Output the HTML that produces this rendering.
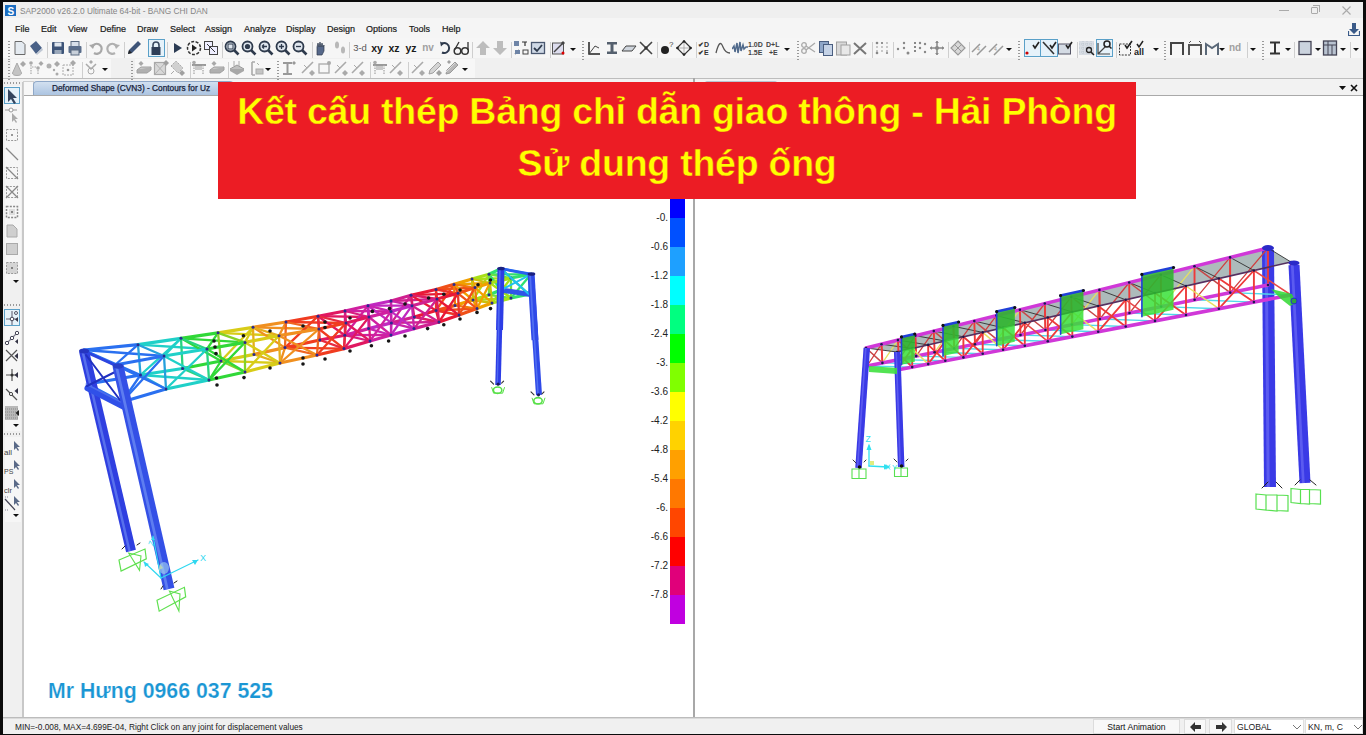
<!DOCTYPE html>
<html><head><meta charset="utf-8">
<style>
*{box-sizing:border-box}
html,body{margin:0;padding:0;width:1366px;height:735px;overflow:hidden;background:#0c0c0c;font-family:"Liberation Sans",sans-serif}
.a{position:absolute}
#win{position:absolute;left:3px;top:2px;width:1360px;height:732px;background:#f0f0f0;overflow:hidden}
.t{position:absolute;white-space:nowrap;font-size:8.3px;color:#1a1a1a;line-height:10px}
.menu .t{top:22px;font-size:9px;color:#1a1a1a;-webkit-text-stroke:0.2px #1a1a1a}
.vp{position:absolute;background:#fff}
</style></head><body>
<div id="win">
  <!-- title bar -->
  <div class="a" style="left:0;top:0;width:1360px;height:16px;background:#efefef"></div><div class="a" style="left:0;top:16px;width:1360px;height:20px;background:#f5f5f5"></div>
  <div class="a" style="left:2px;top:3px;width:11px;height:11px;background:#1b6ec2"></div>
  <div class="t" style="left:4.5px;top:3.5px;font:bold 10px 'Liberation Sans';color:#fff">S</div>
  <div class="t" style="left:17px;top:4px;color:#858585;font-size:8.3px">SAP2000 v26.2.0 Ultimate 64-bit - BANG CHI DAN</div>
  <!-- window buttons -->
  <div class="a" style="left:1276px;top:8px;width:10px;height:1px;background:#aaa"></div>
  <div class="a" style="left:1308px;top:5px;width:7px;height:7px;border:1px solid #aaa;border-radius:1px"></div><div class="a" style="left:1310px;top:3px;width:7px;height:7px;border-top:1px solid #aaa;border-right:1px solid #aaa"></div>
  <svg class="a" style="left:1339px;top:4px" width="9" height="9"><path d="M0.5 0.5l8 8M8.5 0.5l-8 8" stroke="#aaa" stroke-width="1.1"/></svg><svg class="a" style="left:1345px;top:21px" width="12" height="13"><path d="M4 0h4v6h3l-5 5-5-5h3z" fill="#3a5a88"/><path d="M0.5 8v4.5h11V8" fill="none" stroke="#3a5a88" stroke-width="1.2"/></svg>
  <!-- menu -->
  <div class="menu">
    <div class="t" style="left:12px">File</div>
    <div class="t" style="left:38px">Edit</div>
    <div class="t" style="left:65px">View</div>
    <div class="t" style="left:97px">Define</div>
    <div class="t" style="left:134px">Draw</div>
    <div class="t" style="left:167px">Select</div>
    <div class="t" style="left:202px">Assign</div>
    <div class="t" style="left:241px">Analyze</div>
    <div class="t" style="left:283px">Display</div>
    <div class="t" style="left:324px">Design</div>
    <div class="t" style="left:363px">Options</div>
    <div class="t" style="left:406px">Tools</div>
    <div class="t" style="left:439px">Help</div>
  </div>
  <!-- toolbars -->
  <div class="a" style="left:0;top:36px;width:1360px;height:20px;background:#f6f6f6"></div><div class="a" style="left:0;top:56px;width:1360px;height:20px;background:#f0f0f0"></div><div class="a" style="left:8px;top:57px;width:100px;height:19px;background:#f7f7f7"></div><div class="a" style="left:132px;top:57px;width:340px;height:19px;background:#f7f7f7"></div><div class="a" style="left:0;top:77px;width:1360px;height:17px;background:#f2f2f2"></div>
  
  <!-- tab row -->
  <div class="a" style="left:0;top:76px;width:1360px;height:1px;background:#bdbdbd"></div>
  <!-- left toolbar -->
  <div class="a" style="left:0;top:80px;width:19px;height:638px;background:#f0f0f0"></div>
  <div class="a" style="left:19px;top:80px;width:2px;height:638px;background:#c8c8c8"></div>
  <!-- left tab -->
  <div class="a" style="left:20px;top:79px;width:11px;height:15px;background:#f7f7f7;border:1px solid #d0d0d0;border-bottom:none"></div><div class="a" style="left:30px;top:79px;width:200px;height:15px;background:linear-gradient(#d2e0f0,#a9c2e0);border-radius:4px 3px 0 0;border:1px solid #8fa8c8;border-bottom:none"></div><div class="a" style="left:702px;top:79px;width:72px;height:3px;background:#b8c4d0;border-radius:2px 2px 0 0"></div>
  <div class="t" style="left:49px;top:81px;color:#18233a;-webkit-text-stroke:0.25px #18233a">Deformed Shape (CVN3) - Contours for Uz</div>
  <!-- viewports -->
  <div class="vp" style="left:21px;top:94px;width:669px;height:622px"></div>
  <div class="a" style="left:690px;top:76px;width:2px;height:640px;background:#a8a8a8"></div>
  <div class="vp" style="left:692px;top:94px;width:668px;height:622px"></div>
  <div class="a" style="left:21px;top:93px;width:1339px;height:1px;background:#a9a9a9"></div>
  <!-- right close buttons -->
  <svg class="a" style="left:1336px;top:84px" width="7" height="4"><path d="M0 0h7L3.5 4z" fill="#111"/></svg>
  <svg class="a" style="left:1347px;top:82px" width="8" height="8"><path d="M1 1l6 6M7 1L1 7" stroke="#111" stroke-width="1.6"/></svg>
  <!-- status bar -->
  <div class="a" style="left:0;top:715px;width:1360px;height:1px;background:#bcbcbc"></div><div class="a" style="left:0;top:716px;width:1360px;height:1px;background:#dadada"></div>
  <div class="a" style="left:0;top:717px;width:1360px;height:15px;background:#f0f0f0"></div>
  <div class="t" style="left:12px;top:720px;color:#222">MIN=-0.008, MAX=4.699E-04, Right Click on any joint for displacement values</div>
  <div class="a" style="left:1090px;top:717px;width:87px;height:15px;background:#f8f8f8;border:1px solid #dcdcdc"><div class="t" style="left:0;width:100%;text-align:center;top:2px;font-size:8.6px;color:#111">Start Animation</div></div>
<div class="a" style="left:1181px;top:717px;width:22px;height:15px;background:#f8f8f8;border:1px solid #dcdcdc"><svg class="a" style="left:5px;top:2px" width="11" height="10"><path d="M0 5l5-5v3h6v4H5v3z" fill="#333"/></svg></div>
<div class="a" style="left:1206px;top:717px;width:23px;height:15px;background:#f8f8f8;border:1px solid #dcdcdc"><svg class="a" style="left:6px;top:2px" width="11" height="10"><path d="M11 5L6 0v3H0v4h6v3z" fill="#333"/></svg></div>
<div class="a" style="left:1231px;top:717px;width:70px;height:15px;background:#fff;border:1px solid #e0e0e0"><div class="t" style="left:2px;top:2px;font-size:8.6px;color:#222">GLOBAL</div><svg class="a" style="left:58px;top:5px" width="8" height="5"><path d="M0 0l4 4 4-4" fill="none" stroke="#777"/></svg></div>
<div class="a" style="left:1302px;top:717px;width:58px;height:15px;background:#fff;border:1px solid #e0e0e0"><div class="t" style="left:2px;top:2px;font-size:8.6px;color:#222">KN, m, C</div><svg class="a" style="left:48px;top:5px" width="8" height="5"><path d="M0 0l4 4 4-4" fill="none" stroke="#777"/></svg></div>
<div class="a" style="left:5px;top:38.5px;width:2px;height:19px;background:repeating-linear-gradient(#9a9a9a 0 1px,transparent 1px 3px)"></div>
<svg class="a" style="left:9px;top:37.5px" width="16" height="16" viewBox="0 0 16 16"><path d="M3 1.5h7l3 3v10H3z" fill="#e4eaf0" stroke="#6a6a6a"/></svg>
<svg class="a" style="left:25px;top:37.5px" width="16" height="16" viewBox="0 0 16 16"><path d="M2 6l6-5 6 7-6 6z" fill="#4a6288"/><path d="M8 14l6-6 1 2-6 5z" fill="#c0c8d4"/></svg>
<div class="a" style="left:44px;top:39.5px;width:1px;height:16px;background:#cfcfcf"></div>
<svg class="a" style="left:47px;top:37.5px" width="16" height="16" viewBox="0 0 16 16"><rect x="2" y="2" width="12" height="12" rx="1" fill="#3d5478"/><rect x="4.5" y="2.5" width="7" height="4" fill="#dfe6ee"/><rect x="4.5" y="10" width="7" height="4" fill="#9aa8ba"/></svg>
<svg class="a" style="left:64px;top:37.5px" width="16" height="16" viewBox="0 0 16 16"><rect x="4" y="1.5" width="8" height="5" fill="#d8e0ea" stroke="#5a6a80"/><rect x="1.5" y="6" width="13" height="7" rx="1" fill="#5a6e8c"/><rect x="4" y="10" width="8" height="5" fill="#c8d0da" stroke="#5a6a80"/></svg>
<div class="a" style="left:83px;top:39.5px;width:1px;height:16px;background:#cfcfcf"></div>
<svg class="a" style="left:85px;top:37.5px" width="16" height="16" viewBox="0 0 16 16"><path d="M4 7a5 5 0 1 1 2 6" fill="none" stroke="#a8a8a8" stroke-width="2.2"/><path d="M1 5l4 4 2-5z" fill="#a8a8a8"/></svg>
<svg class="a" style="left:102px;top:37.5px" width="16" height="16" viewBox="0 0 16 16"><path d="M12 7a5 5 0 1 0-2 6" fill="none" stroke="#b0b0b0" stroke-width="2.2"/><path d="M15 5l-4 4-2-5z" fill="#b0b0b0"/></svg>
<div class="a" style="left:121px;top:39.5px;width:1px;height:16px;background:#cfcfcf"></div>
<svg class="a" style="left:123px;top:37.5px" width="16" height="16" viewBox="0 0 16 16"><path d="M2 14l1-4 9-9 3 3-9 9z" fill="#3e5478"/><path d="M2 14l1-4 3 3z" fill="#222"/></svg>
<div class="a" style="left:145px;top:36.5px;width:17px;height:18px;border:1px solid #5aa0c8;background:#e6f2fa"></div>
<svg class="a" style="left:145px;top:37.5px" width="16" height="16" viewBox="0 0 16 16"><path d="M5 7V5a3 3 0 0 1 6 0v2" fill="none" stroke="#3a4a62" stroke-width="1.6"/><rect x="3.5" y="7" width="9" height="8" fill="#2e3e58"/></svg>
<div class="a" style="left:164px;top:39.5px;width:1px;height:16px;background:#cfcfcf"></div>
<svg class="a" style="left:166px;top:37.5px" width="16" height="16" viewBox="0 0 16 16"><path d="M5 3l8 5-8 5z" fill="#2c3c54"/></svg>
<svg class="a" style="left:183px;top:37.5px" width="16" height="16" viewBox="0 0 16 16"><circle cx="8" cy="8" r="6.5" fill="none" stroke="#333" stroke-width="1.5" stroke-dasharray="3 1.5"/><path d="M6 4.5l5 3.5-5 3.5z" fill="#222"/></svg>
<svg class="a" style="left:200px;top:37.5px" width="16" height="16" viewBox="0 0 16 16"><rect x="1.5" y="1.5" width="8" height="8" fill="#eef" stroke="#444"/><rect x="6.5" y="6.5" width="8" height="8" fill="#eef" stroke="#444"/><path d="M4 4l8 8" stroke="#333"/></svg>
<div class="a" style="left:219px;top:39.5px;width:1px;height:16px;background:#cfcfcf"></div>
<svg class="a" style="left:221px;top:37.5px" width="16" height="16" viewBox="0 0 16 16"><circle cx="6.5" cy="6.5" r="5" fill="#dfe6ee" stroke="#2e3a4c" stroke-width="1.8"/><rect x="4" y="4" width="5" height="5" fill="none" stroke="#2e3a4c"/><path d="M10 10l4.5 4.5" stroke="#2e3a4c" stroke-width="2.6"/></svg>
<svg class="a" style="left:238px;top:37.5px" width="16" height="16" viewBox="0 0 16 16"><circle cx="6.5" cy="6.5" r="5" fill="#dfe6ee" stroke="#2e3a4c" stroke-width="1.8"/><circle cx="6.5" cy="6.5" r="2.6" fill="#2e3a4c"/><path d="M10 10l4.5 4.5" stroke="#2e3a4c" stroke-width="2.6"/></svg>
<svg class="a" style="left:255px;top:37.5px" width="16" height="16" viewBox="0 0 16 16"><circle cx="6.5" cy="6.5" r="5" fill="#dfe6ee" stroke="#2e3a4c" stroke-width="1.8"/><path d="M4 6.5h5M4 6.5l2-2M4 6.5l2 2" stroke="#2e3a4c" stroke-width="1.3"/><path d="M10 10l4.5 4.5" stroke="#2e3a4c" stroke-width="2.6"/></svg>
<svg class="a" style="left:272px;top:37.5px" width="16" height="16" viewBox="0 0 16 16"><circle cx="6.5" cy="6.5" r="5" fill="#dfe6ee" stroke="#2e3a4c" stroke-width="1.8"/><path d="M4 6.5h5M6.5 4v5" stroke="#2e3a4c" stroke-width="1.3"/><path d="M10 10l4.5 4.5" stroke="#2e3a4c" stroke-width="2.6"/></svg>
<svg class="a" style="left:289px;top:37.5px" width="16" height="16" viewBox="0 0 16 16"><circle cx="6.5" cy="6.5" r="5" fill="#dfe6ee" stroke="#2e3a4c" stroke-width="1.8"/><path d="M4 6.5h5" stroke="#2e3a4c" stroke-width="1.3"/><path d="M10 10l4.5 4.5" stroke="#2e3a4c" stroke-width="2.6"/></svg>
<div class="a" style="left:309px;top:39.5px;width:1px;height:16px;background:#cfcfcf"></div>
<svg class="a" style="left:310px;top:37.5px" width="16" height="16" viewBox="0 0 16 16"><path d="M4 15V7l1-4 1 4 1-5 1 5 1-4 1 4 1-2v6l-2 4z" fill="#56688a" stroke="#2e3a4c" stroke-width=".7"/></svg>
<svg class="a" style="left:329px;top:37.5px" width="16" height="16" viewBox="0 0 16 16"><ellipse cx="5" cy="5" rx="2" ry="3.5" fill="#b8b8b8"/><ellipse cx="11" cy="10" rx="2" ry="3.5" fill="#b8b8b8"/></svg>
<div class="a" style="left:346px;top:39.5px;width:1px;height:16px;background:#cfcfcf"></div>
<div class="t" style="left:357px;top:39.5px;transform:translateX(-50%);font:normal 9.5px 'Liberation Sans';color:#555;line-height:12px">3-d</div>
<div class="t" style="left:374px;top:39.5px;transform:translateX(-50%);font:bold 10.5px 'Liberation Sans';color:#1a1a1a;line-height:12px">xy</div>
<div class="t" style="left:391px;top:39.5px;transform:translateX(-50%);font:bold 10.5px 'Liberation Sans';color:#1a1a1a;line-height:12px">xz</div>
<div class="t" style="left:408px;top:39.5px;transform:translateX(-50%);font:bold 10.5px 'Liberation Sans';color:#1a1a1a;line-height:12px">yz</div>
<div class="t" style="left:425px;top:39.5px;transform:translateX(-50%);font:bold 10px 'Liberation Sans';color:#a0a0a0;line-height:12px">nv</div>
<svg class="a" style="left:434px;top:37.5px" width="16" height="16" viewBox="0 0 16 16"><path d="M5 3.5a5 5 0 1 1 0 9" fill="none" stroke="#2e3a4c" stroke-width="2"/><path d="M3 1.5l4 2-3 3z" fill="#2e3a4c"/></svg>
<svg class="a" style="left:450px;top:37.5px" width="16" height="16" viewBox="0 0 16 16"><circle cx="4.5" cy="11" r="3.3" fill="none" stroke="#333" stroke-width="1.5"/><circle cx="12" cy="11" r="3.3" fill="none" stroke="#333" stroke-width="1.5"/><path d="M1.5 10L6 2M15 10V2" stroke="#333" stroke-width="1.3"/></svg>
<div class="a" style="left:469px;top:39.5px;width:1px;height:16px;background:#cfcfcf"></div>
<svg class="a" style="left:472px;top:37.5px" width="16" height="16" viewBox="0 0 16 16"><path d="M8 1l7 7h-4v7H5V8H1z" fill="#bdbdbd"/></svg>
<svg class="a" style="left:489px;top:37.5px" width="16" height="16" viewBox="0 0 16 16"><path d="M8 15l7-7h-4V1H5v7H1z" fill="#bdbdbd"/></svg>
<div class="a" style="left:508px;top:39.5px;width:1px;height:16px;background:#cfcfcf"></div>
<svg class="a" style="left:510px;top:37.5px" width="16" height="16" viewBox="0 0 16 16"><rect x="1" y="1" width="5" height="5" fill="#6e84a6"/><rect x="10" y="10" width="5" height="4" fill="none" stroke="#444"/><path d="M9 2l5 0M12 2v4M2 14l4-4" stroke="#333" stroke-width="1.2"/><rect x="2" y="10" width="5" height="4" fill="#6e84a6"/></svg>
<svg class="a" style="left:527px;top:37.5px" width="16" height="16" viewBox="0 0 16 16"><rect x="1.5" y="2.5" width="13" height="11" fill="#cfd9e6" stroke="#4a5870" stroke-width="1.3"/><path d="M4 8l3 3 5-6" fill="none" stroke="#2e3a4c" stroke-width="1.8"/></svg>
<div class="a" style="left:547px;top:39.5px;width:1px;height:16px;background:#cfcfcf"></div>
<svg class="a" style="left:548px;top:37.5px" width="16" height="16" viewBox="0 0 16 16"><rect x="1.5" y="3" width="11" height="11" fill="#dde" stroke="#555"/><path d="M3 12l9-9" stroke="#444" stroke-width="1.5"/><circle cx="12" cy="13" r="1.5" fill="#d00"/><path d="M12 1l2 2-2 2-2-2z" fill="#444"/></svg>
<svg class="a" style="left:567px;top:45.5px" width="6" height="4"><path d="M0 0H6L3 3Z" fill="#111"/></svg>
<div class="a" style="left:579px;top:38.5px;width:2px;height:19px;background:repeating-linear-gradient(#9a9a9a 0 1px,transparent 1px 3px)"></div>
<svg class="a" style="left:583px;top:37.5px" width="16" height="16" viewBox="0 0 16 16"><path d="M3 2v12h11" fill="none" stroke="#222" stroke-width="1.5"/><path d="M3 14l6-8 4 2" fill="none" stroke="#444"/></svg>
<svg class="a" style="left:601px;top:37.5px" width="16" height="16" viewBox="0 0 16 16"><path d="M3 2h10v2.5H9.5v7H13V14H3v-2.5h3.5v-7H3z" fill="#55606e"/></svg>
<svg class="a" style="left:618px;top:37.5px" width="16" height="16" viewBox="0 0 16 16"><path d="M1 11l4-5h10l-4 5z" fill="#d0d6de" stroke="#444"/></svg>
<svg class="a" style="left:635px;top:37.5px" width="16" height="16" viewBox="0 0 16 16"><path d="M2 2l12 12M2 14l12-12" stroke="#444" stroke-width="1.6"/><circle cx="8" cy="8" r="1.7" fill="#333"/></svg>
<div class="a" style="left:654px;top:39.5px;width:1px;height:16px;background:#cfcfcf"></div>
<svg class="a" style="left:656px;top:37.5px" width="16" height="16" viewBox="0 0 16 16"><circle cx="6" cy="10" r="4" fill="#222"/><text x="10" y="7" font-size="8" fill="#444" font-family="Liberation Sans">?</text></svg>
<svg class="a" style="left:673px;top:37.5px" width="16" height="16" viewBox="0 0 16 16"><path d="M8 1l7 7-7 7-7-7z" fill="none" stroke="#333" stroke-width="1.2"/><path d="M8 1v14M1 8h14" stroke="#999" stroke-width=".7"/><circle cx="8" cy="1.5" r="1.3" fill="#222"/><circle cx="8" cy="14.5" r="1.3" fill="#222"/><circle cx="1.5" cy="8" r="1.3" fill="#222"/><circle cx="14.5" cy="8" r="1.3" fill="#222"/></svg>
<div class="a" style="left:693px;top:39.5px;width:1px;height:16px;background:#cfcfcf"></div>
<svg class="a" style="left:695px;top:37.5px" width="16" height="16" viewBox="0 0 16 16"><text x="0" y="7" font-size="7" font-weight="bold" fill="#333" font-family="Liberation Sans">&#x2714;D</text><text x="0" y="15" font-size="7" font-weight="bold" fill="#333" font-family="Liberation Sans">&#x2714;E</text></svg>
<svg class="a" style="left:712px;top:37.5px" width="16" height="16" viewBox="0 0 16 16"><path d="M1 13C4 1 6 2 8 7s4 6 7 6" fill="none" stroke="#555" stroke-width="1.3"/></svg>
<svg class="a" style="left:729px;top:37.5px" width="16" height="16" viewBox="0 0 16 16"><path d="M0 9l2-3 1 6 2-9 1 10 2-11 1 9 2-6 1 4 2-2h2" fill="none" stroke="#506a8c" stroke-width="1.5"/></svg>
<svg class="a" style="left:745px;top:37.5px" width="16" height="16" viewBox="0 0 16 16"><text x="0" y="7" font-size="7" font-weight="bold" fill="#444" font-family="Liberation Sans">1.0D</text><text x="0" y="15" font-size="7" font-weight="bold" fill="#444" font-family="Liberation Sans">1.5E</text></svg>
<svg class="a" style="left:763px;top:37.5px" width="16" height="16" viewBox="0 0 16 16"><text x="0" y="7" font-size="7" font-weight="bold" fill="#444" font-family="Liberation Sans">D+L</text><text x="3" y="15" font-size="7" font-weight="bold" fill="#444" font-family="Liberation Sans">+E</text></svg>
<svg class="a" style="left:781px;top:45.5px" width="6" height="4"><path d="M0 0H6L3 3Z" fill="#111"/></svg>
<div class="a" style="left:794px;top:38.5px;width:2px;height:19px;background:repeating-linear-gradient(#9a9a9a 0 1px,transparent 1px 3px)"></div>
<svg class="a" style="left:797px;top:37.5px" width="16" height="16" viewBox="0 0 16 16"><circle cx="4" cy="11" r="2.3" fill="none" stroke="#aaa" stroke-width="1.3"/><circle cx="4" cy="5" r="2.3" fill="none" stroke="#aaa" stroke-width="1.3"/><path d="M6 10L15 3M6 6l9 6" stroke="#aaa" stroke-width="1.3"/></svg>
<svg class="a" style="left:815px;top:37.5px" width="16" height="16" viewBox="0 0 16 16"><rect x="1.5" y="1.5" width="9" height="11" fill="#8ea6c8" stroke="#4a5e80"/><rect x="5.5" y="4.5" width="9" height="11" fill="#c4d2e6" stroke="#4a5e80"/></svg>
<svg class="a" style="left:832px;top:37.5px" width="16" height="16" viewBox="0 0 16 16"><rect x="1.5" y="2" width="10" height="13" fill="#d8d8d8" stroke="#a0a0a0"/><rect x="6" y="5" width="9" height="10" fill="#e8e8e8" stroke="#a0a0a0"/></svg>
<svg class="a" style="left:849px;top:37.5px" width="16" height="16" viewBox="0 0 16 16"><path d="M2 3l12 11M14 3L2 14" stroke="#777" stroke-width="2"/></svg>
<div class="a" style="left:869px;top:39.5px;width:1px;height:16px;background:#cfcfcf"></div>
<svg class="a" style="left:871px;top:37.5px" width="16" height="16" viewBox="0 0 16 16"><path d="M3 2v12M8 2v12M13 2v12" stroke="#999" stroke-dasharray="2 2"/><circle cx="3" cy="3" r="1.3" fill="#888"/><circle cx="3" cy="13" r="1.3" fill="#888"/><circle cx="8" cy="3" r="1.1" fill="#888"/><circle cx="13" cy="13" r="1.1" fill="#888"/></svg>
<div class="a" style="left:890px;top:39.5px;width:1px;height:16px;background:#cfcfcf"></div>
<svg class="a" style="left:892px;top:37.5px" width="16" height="16" viewBox="0 0 16 16"><circle cx="3" cy="9" r="1.2" fill="#888"/><circle cx="9" cy="3" r="1.2" fill="#888"/><circle cx="9" cy="8" r="1.2" fill="#888"/><circle cx="13" cy="13" r="1.5" fill="#888"/></svg>
<svg class="a" style="left:909px;top:37.5px" width="16" height="16" viewBox="0 0 16 16"><path d="M3 2v12" stroke="#888" stroke-width="2" stroke-dasharray="2 2"/><circle cx="8" cy="3" r="1.2" fill="#888"/><circle cx="8" cy="8" r="1.2" fill="#888"/><circle cx="13" cy="4" r="1.2" fill="#888"/><circle cx="13" cy="12" r="1.2" fill="#888"/></svg>
<svg class="a" style="left:926px;top:37.5px" width="16" height="16" viewBox="0 0 16 16"><path d="M8 1v14M1 8h14" stroke="#888" stroke-width="1.5"/><path d="M8 1l-2 2h4zM8 15l-2-2h4zM1 8l2-2v4zM15 8l-2-2v4z" fill="#888"/><circle cx="8" cy="8" r="2" fill="#888"/></svg>
<div class="a" style="left:945px;top:39.5px;width:1px;height:16px;background:#cfcfcf"></div>
<svg class="a" style="left:947px;top:37.5px" width="16" height="16" viewBox="0 0 16 16"><path d="M8 1l7 7-7 7-7-7z" fill="#d8d8d8" stroke="#999" stroke-width="1.2"/><path d="M4.5 4.5l7 7M11.5 4.5l-7 7" stroke="#999"/></svg>
<div class="a" style="left:966px;top:39.5px;width:1px;height:16px;background:#cfcfcf"></div>
<svg class="a" style="left:968px;top:37.5px" width="16" height="16" viewBox="0 0 16 16"><path d="M1 12l8-8M6 15l9-9" stroke="#999" stroke-width="1.5"/><text x="6" y="11" font-size="5" fill="#999">4</text></svg>
<svg class="a" style="left:985px;top:37.5px" width="16" height="16" viewBox="0 0 16 16"><path d="M1 12l8-8M6 15l9-9" stroke="#999" stroke-width="1.5"/><text x="6" y="11" font-size="5" fill="#999">4</text></svg>
<svg class="a" style="left:1003px;top:45.5px" width="6" height="4"><path d="M0 0H6L3 3Z" fill="#111"/></svg>
<div class="a" style="left:1015px;top:38.5px;width:2px;height:19px;background:repeating-linear-gradient(#9a9a9a 0 1px,transparent 1px 3px)"></div>
<div class="a" style="left:1021px;top:36.5px;width:17px;height:18px;border:1px solid #5aa0c8;background:#e6f2fa"></div><div class="a" style="left:1037px;top:36.5px;width:18px;height:18px;border:1px solid #5aa0c8;background:#e6f2fa"></div>
<svg class="a" style="left:1021px;top:37.5px" width="16" height="16" viewBox="0 0 16 16"><path d="M2 14l12-12" stroke="#444" stroke-dasharray="2 1" stroke-width="0"/><circle cx="3" cy="13" r="1.6" fill="#c00"/><path d="M9 5l2 3 4-6" fill="none" stroke="#222" stroke-width="1.6"/></svg>
<svg class="a" style="left:1038px;top:37.5px" width="16" height="16" viewBox="0 0 16 16"><path d="M2 2l11 12" stroke="#333" stroke-width="1.6"/><path d="M9 5l2 3 4-6" fill="none" stroke="#222" stroke-width="1.6"/></svg>
<svg class="a" style="left:1054px;top:37.5px" width="16" height="16" viewBox="0 0 16 16"><rect x="1.5" y="4" width="12" height="10" fill="#d4dbe4" stroke="#556"/><path d="M9 5l2 3 4-6" fill="none" stroke="#222" stroke-width="1.6"/></svg>
<div class="a" style="left:1074px;top:39.5px;width:1px;height:16px;background:#cfcfcf"></div>
<svg class="a" style="left:1076px;top:37.5px" width="16" height="16" viewBox="0 0 16 16"><rect x="0" y="1" width="15" height="14" fill="#d8dde4"/><path d="M0 4h15M0 8h15M0 12h15M4 1v14M8 1v14M12 1v14" stroke="#b0b8c4" stroke-width=".6" stroke-dasharray="1 1"/><circle cx="10" cy="10" r="2.5" fill="none" stroke="#222" stroke-width="1.3"/><path d="M12 12l3 3" stroke="#222" stroke-width="1.5"/></svg>
<div class="a" style="left:1093px;top:36.5px;width:17px;height:18px;border:1px solid #5aa0c8;background:#e6f2fa"></div>
<svg class="a" style="left:1093px;top:37.5px" width="16" height="16" viewBox="0 0 16 16"><path d="M2 14L10 6M2 3v11h12" fill="none" stroke="#444" stroke-width="1.2"/><circle cx="11" cy="4" r="3" fill="none" stroke="#222" stroke-width="1.5"/><path d="M13 6l2.5 2.5" stroke="#222" stroke-width="1.5"/></svg>
<div class="a" style="left:1113px;top:39.5px;width:1px;height:16px;background:#cfcfcf"></div>
<svg class="a" style="left:1115px;top:37.5px" width="16" height="16" viewBox="0 0 16 16"><rect x="1.5" y="4" width="11" height="11" fill="none" stroke="#333" stroke-dasharray="2 1.2"/><path d="M7 5l2 3 5-7" fill="none" stroke="#222" stroke-width="1.6"/></svg>
<svg class="a" style="left:1131px;top:37.5px" width="16" height="16" viewBox="0 0 16 16"><path d="M3 4l2 3 4-6" fill="none" stroke="#222" stroke-width="1.5"/><text x="0" y="15" font-size="9" font-weight="bold" fill="#222" font-family="Liberation Sans">all</text></svg>
<svg class="a" style="left:1150px;top:45.5px" width="6" height="4"><path d="M0 0H6L3 3Z" fill="#111"/></svg>
<div class="a" style="left:1161px;top:38.5px;width:2px;height:19px;background:repeating-linear-gradient(#9a9a9a 0 1px,transparent 1px 3px)"></div>
<svg class="a" style="left:1166px;top:37.5px" width="16" height="16" viewBox="0 0 16 16"><path d="M2 15V3h12v12" fill="none" stroke="#444" stroke-width="2"/></svg>
<svg class="a" style="left:1184px;top:37.5px" width="16" height="16" viewBox="0 0 16 16"><path d="M2 15V5h12v10" fill="none" stroke="#555" stroke-width="2"/><path d="M2 3l2-2M14 3l-2-2" stroke="#555"/></svg>
<svg class="a" style="left:1201px;top:37.5px" width="16" height="16" viewBox="0 0 16 16"><path d="M2 15V4l6 4 6-4v11" fill="none" stroke="#5a6878" stroke-width="2"/></svg>
<svg class="a" style="left:1216px;top:45.5px" width="6" height="4"><path d="M0 0H6L3 3Z" fill="#111"/></svg>
<div class="t" style="left:1232px;top:39.5px;transform:translateX(-50%);font:bold 10px 'Liberation Sans';color:#a0a0a0;line-height:12px">nd</div>
<div class="a" style="left:1244px;top:39.5px;width:1px;height:16px;background:#cfcfcf"></div>
<svg class="a" style="left:1247px;top:45.5px" width="6" height="4"><path d="M0 0H6L3 3Z" fill="#111"/></svg>
<div class="a" style="left:1259px;top:38.5px;width:2px;height:19px;background:repeating-linear-gradient(#9a9a9a 0 1px,transparent 1px 3px)"></div>
<svg class="a" style="left:1264px;top:37.5px" width="16" height="16" viewBox="0 0 16 16"><path d="M3 2.5h10M3 13.5h10M8 2.5v11" stroke="#333" stroke-width="2"/></svg>
<svg class="a" style="left:1282px;top:45.5px" width="6" height="4"><path d="M0 0H6L3 3Z" fill="#111"/></svg>
<div class="a" style="left:1291px;top:39.5px;width:1px;height:16px;background:#cfcfcf"></div>
<svg class="a" style="left:1294px;top:37.5px" width="16" height="16" viewBox="0 0 16 16"><rect x="2" y="1.5" width="12" height="13" fill="#cbd3de" stroke="#445" stroke-width="1.3"/></svg>
<svg class="a" style="left:1312px;top:45.5px" width="6" height="4"><path d="M0 0H6L3 3Z" fill="#111"/></svg>
<svg class="a" style="left:1319px;top:37.5px" width="16" height="16" viewBox="0 0 16 16"><rect x="1.5" y="1" width="13" height="14" fill="#b8c2d0" stroke="#445" stroke-width="1.3"/><path d="M1.5 5h13M6 1v14M10 5v10" stroke="#445"/></svg>
<svg class="a" style="left:1337px;top:45.5px" width="6" height="4"><path d="M0 0H6L3 3Z" fill="#111"/></svg>
<div class="a" style="left:1347px;top:39.5px;width:1px;height:16px;background:#cfcfcf"></div>
<svg class="a" style="left:1350px;top:45.5px" width="6" height="4"><path d="M0 0H6L3 3Z" fill="#111"/></svg>
<div class="a" style="left:5px;top:59px;width:2px;height:19px;background:repeating-linear-gradient(#9a9a9a 0 1px,transparent 1px 3px)"></div>
<svg class="a" style="left:8px;top:58px" width="16" height="16" viewBox="0 0 16 16"><path d="M6 3L1.5 13a4.5 2.5 0 0 0 9 0z" fill="#c4c4c4" stroke="#aaa"/><path d="M12 1l3 3-3 3-3-3z" fill="#a8a8a8"/></svg>
<svg class="a" style="left:25px;top:58px" width="16" height="16" viewBox="0 0 16 16"><circle cx="3" cy="3" r="1.8" fill="#aaa"/><circle cx="10" cy="8" r="1.8" fill="#aaa"/><path d="M3 5v10M10 10v5M4 7l5 0" stroke="#aaa" stroke-width="1.2" stroke-dasharray="1.5 1"/><path d="M13 1l2.5 2.5L13 6l-2.5-2.5z" fill="#a8a8a8"/></svg>
<svg class="a" style="left:42px;top:58px" width="16" height="16" viewBox="0 0 16 16"><circle cx="4" cy="6" r="2.5" fill="#b0b0b0"/><circle cx="9" cy="10" r="1.2" fill="#aaa"/><circle cx="12" cy="14" r="1.5" fill="#aaa"/><path d="M12 1l3 3-3 3-3-3z" fill="#a8a8a8"/></svg>
<svg class="a" style="left:58px;top:58px" width="16" height="16" viewBox="0 0 16 16"><rect x="2" y="5" width="10" height="10" fill="none" stroke="#aaa" stroke-dasharray="2 1"/><circle cx="7" cy="10" r="1.3" fill="#999"/><path d="M12 0l3 3-3 3-3-3z" fill="#a8a8a8"/></svg>
<div class="a" style="left:79px;top:60px;width:1px;height:16px;background:#cfcfcf"></div>
<svg class="a" style="left:80px;top:58px" width="16" height="16" viewBox="0 0 16 16"><path d="M3 4l5 5 5-5" fill="none" stroke="#aaa" stroke-width="1.5"/><circle cx="8" cy="11" r="3" fill="none" stroke="#aaa"/><path d="M8 0l2 2-2 2-2-2z" fill="#aaa"/></svg>
<svg class="a" style="left:99px;top:66px" width="6" height="4"><path d="M0 0H6L3 3Z" fill="#111"/></svg>
<div class="a" style="left:128px;top:59px;width:2px;height:19px;background:repeating-linear-gradient(#9a9a9a 0 1px,transparent 1px 3px)"></div>
<svg class="a" style="left:133px;top:58px" width="16" height="16" viewBox="0 0 16 16"><path d="M1 10l4-3h10l-4 3z" fill="#c8c8c8" stroke="#a0a0a0"/><path d="M1 10v3h10l4-3V7" fill="#b0b0b0" stroke="#a0a0a0"/><path d="M5 1l2.5 2.5L5 6 2.5 3.5z" fill="#a8a8a8"/></svg>
<svg class="a" style="left:150px;top:58px" width="16" height="16" viewBox="0 0 16 16"><rect x="1.5" y="2.5" width="11" height="12" fill="#d8d8d8" stroke="#a8a8a8" stroke-width="1.2"/><path d="M1.5 2.5l11 12M12.5 2.5l-11 12" stroke="#b0b0b0"/><path d="M13 0l3 3-3 3-3-3z" fill="#a0a0a0"/></svg>
<svg class="a" style="left:166px;top:58px" width="16" height="16" viewBox="0 0 16 16"><path d="M2 6l5-5 7 7-5 5z" fill="#d0d0d0" stroke="#a8a8a8" stroke-dasharray="1.5 1"/><path d="M13 10l3 3-3 3-3-3z" fill="#a0a0a0"/><path d="M2 14l3-3" stroke="#aaa"/></svg>
<div class="a" style="left:187px;top:60px;width:1px;height:16px;background:#cfcfcf"></div>
<svg class="a" style="left:188px;top:58px" width="16" height="16" viewBox="0 0 16 16"><path d="M1 5h14" stroke="#999" stroke-width="2"/><path d="M3 5v10M12 5v10" stroke="#aaa" stroke-width="1.3" stroke-dasharray="1.5 1"/><rect x="4" y="6" width="7" height="4" fill="#c8c8c8"/><circle cx="3" cy="2.5" r="1.8" fill="#aaa"/></svg>
<svg class="a" style="left:206px;top:58px" width="16" height="16" viewBox="0 0 16 16"><path d="M1 10l4-3h10l-4 3z" fill="#c8c8c8" stroke="#a0a0a0"/><path d="M1 10v3h10l4-3V7" fill="#b0b0b0" stroke="#a0a0a0"/><path d="M5 1l2.5 2.5L5 6 2.5 3.5z" fill="#a8a8a8"/></svg>
<div class="a" style="left:225px;top:60px;width:1px;height:16px;background:#cfcfcf"></div>
<svg class="a" style="left:226px;top:58px" width="16" height="16" viewBox="0 0 16 16"><path d="M1 9l7-4 7 4-7 4z" fill="#c0c0c0" stroke="#999"/><path d="M1 9v2l7 4 7-4V9" fill="#a8a8a8"/><path d="M5 1v5M10 1v5" stroke="#aaa"/></svg>
<svg class="a" style="left:246px;top:58px" width="16" height="16" viewBox="0 0 16 16"><path d="M3 2v13M3 2h3M3 15h3" stroke="#aaa" stroke-width="1.6"/><rect x="7" y="9" width="7" height="5" fill="#c4c4c4" stroke="#aaa"/><path d="M8 3l2 2" stroke="#aaa"/></svg>
<svg class="a" style="left:262px;top:66px" width="6" height="4"><path d="M0 0H6L3 3Z" fill="#111"/></svg>
<div class="a" style="left:274px;top:59px;width:2px;height:19px;background:repeating-linear-gradient(#9a9a9a 0 1px,transparent 1px 3px)"></div>
<svg class="a" style="left:278px;top:58px" width="16" height="16" viewBox="0 0 16 16"><path d="M2 3h9M2 14h9M6.5 3v11" stroke="#999" stroke-width="2"/><path d="M13 1l2 2-2 2-2-2z" fill="#999"/></svg>
<svg class="a" style="left:297px;top:58px" width="16" height="16" viewBox="0 0 16 16"><path d="M2 13L13 2" stroke="#aaa" stroke-width="1.6"/><path d="M12 10l3 3-3 3-3-3z" fill="#aaa"/><path d="M4 5l3 3" stroke="#aaa"/></svg>
<svg class="a" style="left:313px;top:58px" width="16" height="16" viewBox="0 0 16 16"><rect x="3" y="4" width="10" height="9" fill="none" stroke="#aaa" stroke-width="1.3"/><circle cx="13" cy="3" r="2" fill="#aaa"/></svg>
<svg class="a" style="left:330px;top:58px" width="16" height="16" viewBox="0 0 16 16"><path d="M2 13L13 2" stroke="#aaa" stroke-width="1.6"/><path d="M12 10l3 3-3 3-3-3z" fill="#aaa"/><path d="M4 5l3 3" stroke="#aaa"/></svg>
<svg class="a" style="left:347px;top:58px" width="16" height="16" viewBox="0 0 16 16"><path d="M2 13L13 2" stroke="#aaa" stroke-width="1.6"/><path d="M12 10l3 3-3 3-3-3z" fill="#aaa"/><path d="M4 5l3 3" stroke="#aaa"/></svg>
<div class="a" style="left:367px;top:60px;width:1px;height:16px;background:#cfcfcf"></div>
<svg class="a" style="left:369px;top:58px" width="16" height="16" viewBox="0 0 16 16"><path d="M1 5h14" stroke="#999" stroke-width="2"/><path d="M3 5v10M12 5v10" stroke="#aaa" stroke-width="1.3" stroke-dasharray="1.5 1"/><rect x="4" y="6" width="7" height="4" fill="#c8c8c8"/><circle cx="3" cy="2.5" r="1.8" fill="#aaa"/></svg>
<svg class="a" style="left:385px;top:58px" width="16" height="16" viewBox="0 0 16 16"><path d="M2 13L13 2" stroke="#aaa" stroke-width="1.6"/><path d="M12 10l3 3-3 3-3-3z" fill="#aaa"/><path d="M4 5l3 3" stroke="#aaa"/></svg>
<div class="a" style="left:405px;top:60px;width:1px;height:16px;background:#cfcfcf"></div>
<svg class="a" style="left:407px;top:58px" width="16" height="16" viewBox="0 0 16 16"><path d="M2 13L13 2" stroke="#aaa" stroke-width="1.6"/><path d="M12 10l3 3-3 3-3-3z" fill="#aaa"/><path d="M4 5l3 3" stroke="#aaa"/></svg>
<svg class="a" style="left:424px;top:58px" width="16" height="16" viewBox="0 0 16 16"><path d="M2 14l1-4 8-8 3 3-8 8z" fill="#d4d4d4" stroke="#a0a0a0"/><path d="M12 10l3 3-3 3-3-3z" fill="#a0a0a0"/></svg>
<svg class="a" style="left:441px;top:58px" width="16" height="16" viewBox="0 0 16 16"><path d="M2 14l1-4 8-8 3 3-8 8z" fill="#b8b8b8" stroke="#999"/><path d="M2 12l9-9" stroke="#ddd"/><path d="M5 0l2 2-2 2-2-2z" fill="#a0a0a0"/></svg>
<svg class="a" style="left:459px;top:66px" width="6" height="4"><path d="M0 0H6L3 3Z" fill="#111"/></svg>
<div class="a" style="left:2px;top:84px;width:16px;height:194px;background:#f6f6f6"></div>
<div class="a" style="left:2px;top:307px;width:16px;height:122px;background:#f6f6f6"></div>
<div class="a" style="left:2px;top:435px;width:16px;height:85px;background:#f6f6f6"></div>
<div class="a" style="left:1px;top:80px;width:17px;height:2px;background:repeating-linear-gradient(90deg,#9a9a9a 0 1px,transparent 1px 3px)"></div>
<div class="a" style="left:1px;top:85px;width:16px;height:17px;border:1px solid #5aa0c8;background:#e6f2fa"></div>
<svg class="a" style="left:1px;top:86px" width="16" height="16" viewBox="0 0 16 16"><path d="M4 1v13l3-3 3 5 2-1-3-5h4z" fill="#33445e"/></svg>
<svg class="a" style="left:1px;top:105px" width="16" height="16" viewBox="0 0 16 16"><path d="M1 3h12" stroke="#999"/><circle cx="7" cy="3" r="2" fill="#fff" stroke="#999"/><path d="M8 6v9l2-2 2 3 1-1-2-3h3z" fill="#aaa"/></svg>
<svg class="a" style="left:1px;top:125px" width="16" height="16" viewBox="0 0 16 16"><rect x="2.5" y="2.5" width="11" height="11" fill="none" stroke="#999" stroke-dasharray="2 1.3"/><circle cx="8" cy="8" r="1" fill="#777"/></svg>
<svg class="a" style="left:1px;top:144px" width="16" height="16" viewBox="0 0 16 16"><path d="M2 2l12 12" stroke="#888" stroke-width="1.3"/></svg>
<svg class="a" style="left:1px;top:163px" width="16" height="16" viewBox="0 0 16 16"><rect x="2.5" y="2.5" width="11" height="11" fill="none" stroke="#999" stroke-dasharray="2 1.3"/><path d="M2 2l12 12" stroke="#888" stroke-width="1.3"/></svg>
<svg class="a" style="left:1px;top:182px" width="16" height="16" viewBox="0 0 16 16"><rect x="2.5" y="2.5" width="11" height="11" fill="none" stroke="#999" stroke-dasharray="2 1.3"/><path d="M2 2l12 12M14 2L2 14" stroke="#888" stroke-width="1.3"/></svg>
<svg class="a" style="left:1px;top:202px" width="16" height="16" viewBox="0 0 16 16"><rect x="2.5" y="2.5" width="11" height="11" fill="none" stroke="#888" stroke-dasharray="2 1.3" stroke-width="1.5"/><rect x="5" y="5" width="6" height="6" fill="#ddd"/><circle cx="8" cy="8" r="1" fill="#666"/></svg>
<svg class="a" style="left:1px;top:221px" width="16" height="16" viewBox="0 0 16 16"><path d="M3 2h6l4 4v8H3z" fill="#cfcfcf" stroke="#aaa"/></svg>
<svg class="a" style="left:1px;top:239px" width="16" height="16" viewBox="0 0 16 16"><rect x="2.5" y="2.5" width="11" height="11" fill="#cfcfcf" stroke="#aaa"/></svg>
<svg class="a" style="left:1px;top:258px" width="16" height="16" viewBox="0 0 16 16"><rect x="2.5" y="2.5" width="11" height="11" fill="#d4d4d4" stroke="#999" stroke-dasharray="2 1.3"/><circle cx="8" cy="8" r="1" fill="#666"/></svg>
<svg class="a" style="left:10px;top:278px" width="6" height="4"><path d="M0 0H6L3 3Z" fill="#111"/></svg>
<div class="a" style="left:1px;top:302px;width:17px;height:2px;background:repeating-linear-gradient(90deg,#9a9a9a 0 1px,transparent 1px 3px)"></div>
<div class="a" style="left:1px;top:307px;width:16px;height:17px;border:1px solid #5aa0c8;background:#e6f2fa"></div>
<svg class="a" style="left:1px;top:308px" width="16" height="16" viewBox="0 0 16 16"><path d="M8 1v14M2 9h12" stroke="#667" stroke-width="1.1"/><circle cx="8" cy="9" r="1.8" fill="#fff" stroke="#445"/><circle cx="12" cy="3" r="1.5" fill="none" stroke="#556"/><path d="M14 7v5l-3-2.5z" fill="#334"/></svg>
<svg class="a" style="left:1px;top:328px" width="16" height="16" viewBox="0 0 16 16"><path d="M2 14L13 3" stroke="#778" stroke-width="1.1"/><circle cx="3" cy="13" r="1.7" fill="#fff" stroke="#445"/><circle cx="8" cy="8" r="1.7" fill="#fff" stroke="#445"/><circle cx="13" cy="3" r="1.7" fill="#fff" stroke="#445"/><path d="M14 9v5l-3-2.5z" fill="#334"/></svg>
<svg class="a" style="left:1px;top:346px" width="16" height="16" viewBox="0 0 16 16"><path d="M2 2l11 11M13 2L2 13" stroke="#555" stroke-width="1.2"/><path d="M14 5v6l-3.5-3z" fill="#334"/></svg>
<svg class="a" style="left:1px;top:365px" width="16" height="16" viewBox="0 0 16 16"><path d="M8 2v12M2 8h12" stroke="#555" stroke-width="1.2"/><circle cx="8" cy="8" r="1.5" fill="#333"/><path d="M14 5v6l-3.5-3z" fill="#334"/></svg>
<svg class="a" style="left:1px;top:384px" width="16" height="16" viewBox="0 0 16 16"><path d="M2 3l11 11" stroke="#555" stroke-width="1.2"/><circle cx="7" cy="8" r="1.6" fill="#fff" stroke="#444"/><path d="M14 2v6l-3.5-3z" fill="#334"/></svg>
<svg class="a" style="left:1px;top:403px" width="16" height="16" viewBox="0 0 16 16"><rect x="1" y="1" width="13" height="14" fill="#b8b8b8"/><path d="M1 4h13M1 7h13M1 10h13M1 13h13" stroke="#888" stroke-dasharray="1 1"/><path d="M15 5v6l-3.5-3z" fill="#222"/></svg>
<svg class="a" style="left:10px;top:422px" width="6" height="4"><path d="M0 0H6L3 3Z" fill="#111"/></svg>
<div class="a" style="left:1px;top:431px;width:17px;height:2px;background:repeating-linear-gradient(90deg,#9a9a9a 0 1px,transparent 1px 3px)"></div>
<svg class="a" style="left:1px;top:438px" width="16" height="16" viewBox="0 0 16 16"><text x="0" y="15" font-size="8" fill="#444" font-family="Liberation Sans">all</text><path d="M10 1v9l2-2 2 3 1-1-2-3h3z" fill="#5a6a88"/></svg>
<svg class="a" style="left:1px;top:457px" width="16" height="16" viewBox="0 0 16 16"><text x="0" y="15" font-size="7" fill="#444" font-family="Liberation Sans">PS</text><path d="M10 1v9l2-2 2 3 1-1-2-3h3z" fill="#5a6a88"/></svg>
<svg class="a" style="left:1px;top:476px" width="16" height="16" viewBox="0 0 16 16"><text x="0" y="15" font-size="7.5" fill="#444" font-family="Liberation Sans">clr</text><path d="M10 1v9l2-2 2 3 1-1-2-3h3z" fill="#5a6a88"/></svg>
<svg class="a" style="left:1px;top:493px" width="16" height="16" viewBox="0 0 16 16"><path d="M1 4l10 11" stroke="#445" stroke-width="1.2"/><path d="M1 2h4M1 15h4" stroke="#889" stroke-dasharray="1 1"/><path d="M10 1v9l2-2 2 3 1-1-2-3h3z" fill="#5a6a88"/></svg>
<svg class="a" style="left:10px;top:512px" width="6" height="4"><path d="M0 0H6L3 3Z" fill="#111"/></svg>
  <div class="a" style="left:667px;top:187px;width:15px;height:29px;background:#0000ff"></div>
<div class="a" style="left:667px;top:216px;width:15px;height:29px;background:#0050ff"></div>
<div class="a" style="left:667px;top:245px;width:15px;height:29px;background:#1ea0ff"></div>
<div class="a" style="left:667px;top:274px;width:15px;height:29px;background:#00ffff"></div>
<div class="a" style="left:667px;top:303px;width:15px;height:29px;background:#00ff80"></div>
<div class="a" style="left:667px;top:332px;width:15px;height:29px;background:#00ff00"></div>
<div class="a" style="left:667px;top:361px;width:15px;height:29px;background:#80ff00"></div>
<div class="a" style="left:667px;top:390px;width:15px;height:29px;background:#ffff00"></div>
<div class="a" style="left:667px;top:419px;width:15px;height:29px;background:#ffd200"></div>
<div class="a" style="left:667px;top:448px;width:15px;height:29px;background:#ffa000"></div>
<div class="a" style="left:667px;top:477px;width:15px;height:29px;background:#ff7800"></div>
<div class="a" style="left:667px;top:506px;width:15px;height:29px;background:#ff4600"></div>
<div class="a" style="left:667px;top:535px;width:15px;height:29px;background:#ff0000"></div>
<div class="a" style="left:667px;top:564px;width:15px;height:29px;background:#e0007a"></div>
<div class="a" style="left:667px;top:593px;width:15px;height:29px;background:#c000e0"></div>
<div class="t" style="left:595px;top:211px;width:70px;text-align:right;font-size:10px;color:#222">-0.</div>
<div class="t" style="left:595px;top:240px;width:70px;text-align:right;font-size:10px;color:#222">-0.6</div>
<div class="t" style="left:595px;top:269px;width:70px;text-align:right;font-size:10px;color:#222">-1.2</div>
<div class="t" style="left:595px;top:298px;width:70px;text-align:right;font-size:10px;color:#222">-1.8</div>
<div class="t" style="left:595px;top:327px;width:70px;text-align:right;font-size:10px;color:#222">-2.4</div>
<div class="t" style="left:595px;top:356px;width:70px;text-align:right;font-size:10px;color:#222">-3.</div>
<div class="t" style="left:595px;top:385px;width:70px;text-align:right;font-size:10px;color:#222">-3.6</div>
<div class="t" style="left:595px;top:414px;width:70px;text-align:right;font-size:10px;color:#222">-4.2</div>
<div class="t" style="left:595px;top:443px;width:70px;text-align:right;font-size:10px;color:#222">-4.8</div>
<div class="t" style="left:595px;top:472px;width:70px;text-align:right;font-size:10px;color:#222">-5.4</div>
<div class="t" style="left:595px;top:501px;width:70px;text-align:right;font-size:10px;color:#222">-6.</div>
<div class="t" style="left:595px;top:530px;width:70px;text-align:right;font-size:10px;color:#222">-6.6</div>
<div class="t" style="left:595px;top:559px;width:70px;text-align:right;font-size:10px;color:#222">-7.2</div>
<div class="t" style="left:595px;top:588px;width:70px;text-align:right;font-size:10px;color:#222">-7.8</div>
<svg class="a" style="left:-3px;top:-2px" width="1366" height="735" viewBox="0 0 1366 735"><line x1="501.0" y1="268.0" x2="498.0" y2="385.0" stroke="#2d3de6" stroke-width="5.5" stroke-linecap="butt"/><line x1="500.2" y1="268.0" x2="497.2" y2="385.0" stroke="#5a78f5" stroke-width="1.375" stroke-linecap="butt" opacity="0.7"/><line x1="531.0" y1="273.0" x2="539.0" y2="395.0" stroke="#2f4ae8" stroke-width="6" stroke-linecap="butt"/><line x1="530.1" y1="273.0" x2="538.1" y2="395.0" stroke="#6080f5" stroke-width="1.5" stroke-linecap="butt" opacity="0.7"/><line x1="84.0" y1="350.0" x2="138.0" y2="344.7" stroke="#2a70f0" stroke-width="3.2" stroke-linecap="round"/><line x1="88.0" y1="384.0" x2="140.5" y2="375.0" stroke="#2a70f0" stroke-width="3.2" stroke-linecap="round"/><line x1="138.0" y1="344.7" x2="181.0" y2="338.3" stroke="#20d0c8" stroke-width="3.2" stroke-linecap="round"/><line x1="140.5" y1="375.0" x2="182.6" y2="368.5" stroke="#20d0c8" stroke-width="3.2" stroke-linecap="round"/><line x1="181.0" y1="338.3" x2="218.0" y2="332.8" stroke="#30d838" stroke-width="3.2" stroke-linecap="round"/><line x1="182.6" y1="368.5" x2="221.0" y2="361.0" stroke="#30d838" stroke-width="3.2" stroke-linecap="round"/><line x1="218.0" y1="332.8" x2="253.0" y2="327.3" stroke="#d8cc18" stroke-width="3.2" stroke-linecap="round"/><line x1="221.0" y1="361.0" x2="254.0" y2="354.4" stroke="#d8cc18" stroke-width="3.2" stroke-linecap="round"/><line x1="253.0" y1="327.3" x2="286.0" y2="322.0" stroke="#f09020" stroke-width="3.2" stroke-linecap="round"/><line x1="254.0" y1="354.4" x2="285.0" y2="347.6" stroke="#f09020" stroke-width="3.2" stroke-linecap="round"/><line x1="286.0" y1="322.0" x2="318.0" y2="316.2" stroke="#f03c20" stroke-width="3.2" stroke-linecap="round"/><line x1="285.0" y1="347.6" x2="319.8" y2="340.0" stroke="#f03c20" stroke-width="3.2" stroke-linecap="round"/><line x1="318.0" y1="316.2" x2="345.0" y2="311.0" stroke="#e01860" stroke-width="3.2" stroke-linecap="round"/><line x1="319.8" y1="340.0" x2="344.8" y2="335.2" stroke="#e01860" stroke-width="3.2" stroke-linecap="round"/><line x1="345.0" y1="311.0" x2="368.0" y2="305.7" stroke="#d020a0" stroke-width="3.2" stroke-linecap="round"/><line x1="344.8" y1="335.2" x2="368.6" y2="328.6" stroke="#d020a0" stroke-width="3.2" stroke-linecap="round"/><line x1="368.0" y1="305.7" x2="391.0" y2="301.0" stroke="#c028c0" stroke-width="3.2" stroke-linecap="round"/><line x1="368.6" y1="328.6" x2="391.4" y2="322.9" stroke="#c028c0" stroke-width="3.2" stroke-linecap="round"/><line x1="391.0" y1="301.0" x2="411.0" y2="295.2" stroke="#d02090" stroke-width="3.2" stroke-linecap="round"/><line x1="391.4" y1="322.9" x2="414.3" y2="317.0" stroke="#d02090" stroke-width="3.2" stroke-linecap="round"/><line x1="411.0" y1="295.2" x2="436.0" y2="289.5" stroke="#e81838" stroke-width="3.2" stroke-linecap="round"/><line x1="414.3" y1="317.0" x2="436.0" y2="310.5" stroke="#e81838" stroke-width="3.2" stroke-linecap="round"/><line x1="436.0" y1="289.5" x2="454.0" y2="284.4" stroke="#f05018" stroke-width="3.2" stroke-linecap="round"/><line x1="436.0" y1="310.5" x2="455.0" y2="305.4" stroke="#f05018" stroke-width="3.2" stroke-linecap="round"/><line x1="454.0" y1="284.4" x2="472.0" y2="279.0" stroke="#f0a000" stroke-width="3.2" stroke-linecap="round"/><line x1="455.0" y1="305.4" x2="473.0" y2="300.0" stroke="#f0a000" stroke-width="3.2" stroke-linecap="round"/><line x1="472.0" y1="279.0" x2="489.0" y2="274.3" stroke="#a8e018" stroke-width="3.2" stroke-linecap="round"/><line x1="473.0" y1="300.0" x2="489.0" y2="294.8" stroke="#a8e018" stroke-width="3.2" stroke-linecap="round"/><line x1="489.0" y1="274.3" x2="501.0" y2="268.6" stroke="#30e070" stroke-width="3.2" stroke-linecap="round"/><line x1="489.0" y1="294.8" x2="501.0" y2="290.0" stroke="#30e070" stroke-width="3.2" stroke-linecap="round"/><line x1="84.0" y1="350.0" x2="140.5" y2="375.0" stroke="#2a70f0" stroke-width="2.3" stroke-linecap="round"/><line x1="84.0" y1="350.0" x2="164.0" y2="356.0" stroke="#2a70f0" stroke-width="2.3" stroke-linecap="round"/><line x1="115.0" y1="365.0" x2="138.0" y2="344.7" stroke="#2a70f0" stroke-width="2.3" stroke-linecap="round"/><line x1="122.0" y1="402.0" x2="140.5" y2="375.0" stroke="#2a70f0" stroke-width="2.3" stroke-linecap="round"/><line x1="140.5" y1="375.0" x2="181.0" y2="338.3" stroke="#20d0c8" stroke-width="2.3" stroke-linecap="round"/><line x1="138.0" y1="344.7" x2="207.0" y2="349.0" stroke="#20d0c8" stroke-width="2.3" stroke-linecap="round"/><line x1="164.0" y1="356.0" x2="181.0" y2="338.3" stroke="#20d0c8" stroke-width="2.3" stroke-linecap="round"/><line x1="140.5" y1="375.0" x2="209.0" y2="380.0" stroke="#20d0c8" stroke-width="2.3" stroke-linecap="round"/><line x1="181.0" y1="338.3" x2="221.0" y2="361.0" stroke="#30d838" stroke-width="2.3" stroke-linecap="round"/><line x1="181.0" y1="338.3" x2="245.0" y2="342.4" stroke="#30d838" stroke-width="2.3" stroke-linecap="round"/><line x1="207.0" y1="349.0" x2="218.0" y2="332.8" stroke="#30d838" stroke-width="2.3" stroke-linecap="round"/><line x1="209.0" y1="380.0" x2="221.0" y2="361.0" stroke="#30d838" stroke-width="2.3" stroke-linecap="round"/><line x1="221.0" y1="361.0" x2="253.0" y2="327.3" stroke="#d8cc18" stroke-width="2.3" stroke-linecap="round"/><line x1="218.0" y1="332.8" x2="279.0" y2="335.7" stroke="#d8cc18" stroke-width="2.3" stroke-linecap="round"/><line x1="245.0" y1="342.4" x2="253.0" y2="327.3" stroke="#d8cc18" stroke-width="2.3" stroke-linecap="round"/><line x1="221.0" y1="361.0" x2="280.0" y2="363.0" stroke="#d8cc18" stroke-width="2.3" stroke-linecap="round"/><line x1="253.0" y1="327.3" x2="285.0" y2="347.6" stroke="#f09020" stroke-width="2.3" stroke-linecap="round"/><line x1="253.0" y1="327.3" x2="319.0" y2="329.0" stroke="#f09020" stroke-width="2.3" stroke-linecap="round"/><line x1="279.0" y1="335.7" x2="286.0" y2="322.0" stroke="#f09020" stroke-width="2.3" stroke-linecap="round"/><line x1="280.0" y1="363.0" x2="285.0" y2="347.6" stroke="#f09020" stroke-width="2.3" stroke-linecap="round"/><line x1="285.0" y1="347.6" x2="318.0" y2="316.2" stroke="#f03c20" stroke-width="2.3" stroke-linecap="round"/><line x1="286.0" y1="322.0" x2="346.0" y2="323.0" stroke="#f03c20" stroke-width="2.3" stroke-linecap="round"/><line x1="319.0" y1="329.0" x2="318.0" y2="316.2" stroke="#f03c20" stroke-width="2.3" stroke-linecap="round"/><line x1="285.0" y1="347.6" x2="344.0" y2="348.6" stroke="#f03c20" stroke-width="2.3" stroke-linecap="round"/><line x1="318.0" y1="316.2" x2="344.8" y2="335.2" stroke="#e01860" stroke-width="2.3" stroke-linecap="round"/><line x1="318.0" y1="316.2" x2="369.0" y2="317.0" stroke="#e01860" stroke-width="2.3" stroke-linecap="round"/><line x1="346.0" y1="323.0" x2="345.0" y2="311.0" stroke="#e01860" stroke-width="2.3" stroke-linecap="round"/><line x1="344.0" y1="348.6" x2="344.8" y2="335.2" stroke="#e01860" stroke-width="2.3" stroke-linecap="round"/><line x1="344.8" y1="335.2" x2="368.0" y2="305.7" stroke="#d020a0" stroke-width="2.3" stroke-linecap="round"/><line x1="345.0" y1="311.0" x2="391.0" y2="311.4" stroke="#d020a0" stroke-width="2.3" stroke-linecap="round"/><line x1="369.0" y1="317.0" x2="368.0" y2="305.7" stroke="#d020a0" stroke-width="2.3" stroke-linecap="round"/><line x1="344.8" y1="335.2" x2="391.0" y2="335.0" stroke="#d020a0" stroke-width="2.3" stroke-linecap="round"/><line x1="368.0" y1="305.7" x2="391.4" y2="322.9" stroke="#c028c0" stroke-width="2.3" stroke-linecap="round"/><line x1="368.0" y1="305.7" x2="412.0" y2="305.7" stroke="#c028c0" stroke-width="2.3" stroke-linecap="round"/><line x1="391.0" y1="311.4" x2="391.0" y2="301.0" stroke="#c028c0" stroke-width="2.3" stroke-linecap="round"/><line x1="391.0" y1="335.0" x2="391.4" y2="322.9" stroke="#c028c0" stroke-width="2.3" stroke-linecap="round"/><line x1="391.4" y1="322.9" x2="411.0" y2="295.2" stroke="#d02090" stroke-width="2.3" stroke-linecap="round"/><line x1="391.0" y1="301.0" x2="437.0" y2="299.0" stroke="#d02090" stroke-width="2.3" stroke-linecap="round"/><line x1="412.0" y1="305.7" x2="411.0" y2="295.2" stroke="#d02090" stroke-width="2.3" stroke-linecap="round"/><line x1="391.4" y1="322.9" x2="439.0" y2="322.0" stroke="#d02090" stroke-width="2.3" stroke-linecap="round"/><line x1="411.0" y1="295.2" x2="436.0" y2="310.5" stroke="#e81838" stroke-width="2.3" stroke-linecap="round"/><line x1="411.0" y1="295.2" x2="458.0" y2="293.3" stroke="#e81838" stroke-width="2.3" stroke-linecap="round"/><line x1="437.0" y1="299.0" x2="436.0" y2="289.5" stroke="#e81838" stroke-width="2.3" stroke-linecap="round"/><line x1="439.0" y1="322.0" x2="436.0" y2="310.5" stroke="#e81838" stroke-width="2.3" stroke-linecap="round"/><line x1="436.0" y1="310.5" x2="454.0" y2="284.4" stroke="#f05018" stroke-width="2.3" stroke-linecap="round"/><line x1="436.0" y1="289.5" x2="475.0" y2="287.6" stroke="#f05018" stroke-width="2.3" stroke-linecap="round"/><line x1="458.0" y1="293.3" x2="454.0" y2="284.4" stroke="#f05018" stroke-width="2.3" stroke-linecap="round"/><line x1="436.0" y1="310.5" x2="477.0" y2="308.6" stroke="#f05018" stroke-width="2.3" stroke-linecap="round"/><line x1="454.0" y1="284.4" x2="473.0" y2="300.0" stroke="#f0a000" stroke-width="2.3" stroke-linecap="round"/><line x1="454.0" y1="284.4" x2="490.0" y2="283.0" stroke="#f0a000" stroke-width="2.3" stroke-linecap="round"/><line x1="475.0" y1="287.6" x2="472.0" y2="279.0" stroke="#f0a000" stroke-width="2.3" stroke-linecap="round"/><line x1="477.0" y1="308.6" x2="473.0" y2="300.0" stroke="#f0a000" stroke-width="2.3" stroke-linecap="round"/><line x1="473.0" y1="300.0" x2="489.0" y2="274.3" stroke="#a8e018" stroke-width="2.3" stroke-linecap="round"/><line x1="472.0" y1="279.0" x2="511.0" y2="278.0" stroke="#a8e018" stroke-width="2.3" stroke-linecap="round"/><line x1="490.0" y1="283.0" x2="489.0" y2="274.3" stroke="#a8e018" stroke-width="2.3" stroke-linecap="round"/><line x1="473.0" y1="300.0" x2="511.0" y2="298.0" stroke="#a8e018" stroke-width="2.3" stroke-linecap="round"/><line x1="489.0" y1="274.3" x2="501.0" y2="290.0" stroke="#30e070" stroke-width="2.3" stroke-linecap="round"/><line x1="489.0" y1="274.3" x2="531.0" y2="274.3" stroke="#30e070" stroke-width="2.3" stroke-linecap="round"/><line x1="511.0" y1="278.0" x2="501.0" y2="268.6" stroke="#30e070" stroke-width="2.3" stroke-linecap="round"/><line x1="511.0" y1="298.0" x2="501.0" y2="290.0" stroke="#30e070" stroke-width="2.3" stroke-linecap="round"/><line x1="84.0" y1="350.0" x2="88.0" y2="384.0" stroke="#2a70f0" stroke-width="2.3" stroke-linecap="round"/><line x1="84.0" y1="350.0" x2="115.0" y2="365.0" stroke="#2a70f0" stroke-width="2.3" stroke-linecap="round"/><line x1="88.0" y1="384.0" x2="122.0" y2="402.0" stroke="#2a70f0" stroke-width="2.3" stroke-linecap="round"/><line x1="138.0" y1="344.7" x2="140.5" y2="375.0" stroke="#25a0dc" stroke-width="2.3" stroke-linecap="round"/><line x1="138.0" y1="344.7" x2="164.0" y2="356.0" stroke="#25a0dc" stroke-width="2.3" stroke-linecap="round"/><line x1="140.5" y1="375.0" x2="166.0" y2="389.0" stroke="#25a0dc" stroke-width="2.3" stroke-linecap="round"/><line x1="181.0" y1="338.3" x2="182.6" y2="368.5" stroke="#28d480" stroke-width="2.3" stroke-linecap="round"/><line x1="181.0" y1="338.3" x2="207.0" y2="349.0" stroke="#28d480" stroke-width="2.3" stroke-linecap="round"/><line x1="182.6" y1="368.5" x2="209.0" y2="380.0" stroke="#28d480" stroke-width="2.3" stroke-linecap="round"/><line x1="218.0" y1="332.8" x2="221.0" y2="361.0" stroke="#84d228" stroke-width="2.3" stroke-linecap="round"/><line x1="218.0" y1="332.8" x2="245.0" y2="342.4" stroke="#84d228" stroke-width="2.3" stroke-linecap="round"/><line x1="221.0" y1="361.0" x2="245.0" y2="372.0" stroke="#84d228" stroke-width="2.3" stroke-linecap="round"/><line x1="253.0" y1="327.3" x2="254.0" y2="354.4" stroke="#e4ae1c" stroke-width="2.3" stroke-linecap="round"/><line x1="253.0" y1="327.3" x2="279.0" y2="335.7" stroke="#e4ae1c" stroke-width="2.3" stroke-linecap="round"/><line x1="254.0" y1="354.4" x2="280.0" y2="363.0" stroke="#e4ae1c" stroke-width="2.3" stroke-linecap="round"/><line x1="286.0" y1="322.0" x2="285.0" y2="347.6" stroke="#f06620" stroke-width="2.3" stroke-linecap="round"/><line x1="286.0" y1="322.0" x2="319.0" y2="329.0" stroke="#f06620" stroke-width="2.3" stroke-linecap="round"/><line x1="285.0" y1="347.6" x2="317.0" y2="355.0" stroke="#f06620" stroke-width="2.3" stroke-linecap="round"/><line x1="318.0" y1="316.2" x2="319.8" y2="340.0" stroke="#e82a40" stroke-width="2.3" stroke-linecap="round"/><line x1="318.0" y1="316.2" x2="346.0" y2="323.0" stroke="#e82a40" stroke-width="2.3" stroke-linecap="round"/><line x1="319.8" y1="340.0" x2="344.0" y2="348.6" stroke="#e82a40" stroke-width="2.3" stroke-linecap="round"/><line x1="345.0" y1="311.0" x2="344.8" y2="335.2" stroke="#d81c80" stroke-width="2.3" stroke-linecap="round"/><line x1="345.0" y1="311.0" x2="369.0" y2="317.0" stroke="#d81c80" stroke-width="2.3" stroke-linecap="round"/><line x1="344.8" y1="335.2" x2="370.0" y2="341.0" stroke="#d81c80" stroke-width="2.3" stroke-linecap="round"/><line x1="368.0" y1="305.7" x2="368.6" y2="328.6" stroke="#c824b0" stroke-width="2.3" stroke-linecap="round"/><line x1="368.0" y1="305.7" x2="391.0" y2="311.4" stroke="#c824b0" stroke-width="2.3" stroke-linecap="round"/><line x1="368.6" y1="328.6" x2="391.0" y2="335.0" stroke="#c824b0" stroke-width="2.3" stroke-linecap="round"/><line x1="391.0" y1="301.0" x2="391.4" y2="322.9" stroke="#c824a8" stroke-width="2.3" stroke-linecap="round"/><line x1="391.0" y1="301.0" x2="412.0" y2="305.7" stroke="#c824a8" stroke-width="2.3" stroke-linecap="round"/><line x1="391.4" y1="322.9" x2="414.0" y2="328.6" stroke="#c824a8" stroke-width="2.3" stroke-linecap="round"/><line x1="411.0" y1="295.2" x2="414.3" y2="317.0" stroke="#dc1c64" stroke-width="2.3" stroke-linecap="round"/><line x1="411.0" y1="295.2" x2="437.0" y2="299.0" stroke="#dc1c64" stroke-width="2.3" stroke-linecap="round"/><line x1="414.3" y1="317.0" x2="439.0" y2="322.0" stroke="#dc1c64" stroke-width="2.3" stroke-linecap="round"/><line x1="436.0" y1="289.5" x2="436.0" y2="310.5" stroke="#ec3428" stroke-width="2.3" stroke-linecap="round"/><line x1="436.0" y1="289.5" x2="458.0" y2="293.3" stroke="#ec3428" stroke-width="2.3" stroke-linecap="round"/><line x1="436.0" y1="310.5" x2="459.0" y2="315.0" stroke="#ec3428" stroke-width="2.3" stroke-linecap="round"/><line x1="454.0" y1="284.4" x2="455.0" y2="305.4" stroke="#f0780c" stroke-width="2.3" stroke-linecap="round"/><line x1="454.0" y1="284.4" x2="475.0" y2="287.6" stroke="#f0780c" stroke-width="2.3" stroke-linecap="round"/><line x1="455.0" y1="305.4" x2="477.0" y2="308.6" stroke="#f0780c" stroke-width="2.3" stroke-linecap="round"/><line x1="472.0" y1="279.0" x2="473.0" y2="300.0" stroke="#ccc00c" stroke-width="2.3" stroke-linecap="round"/><line x1="472.0" y1="279.0" x2="490.0" y2="283.0" stroke="#ccc00c" stroke-width="2.3" stroke-linecap="round"/><line x1="473.0" y1="300.0" x2="492.0" y2="303.0" stroke="#ccc00c" stroke-width="2.3" stroke-linecap="round"/><line x1="489.0" y1="274.3" x2="489.0" y2="294.8" stroke="#6ce044" stroke-width="2.3" stroke-linecap="round"/><line x1="489.0" y1="274.3" x2="511.0" y2="278.0" stroke="#6ce044" stroke-width="2.3" stroke-linecap="round"/><line x1="489.0" y1="294.8" x2="511.0" y2="298.0" stroke="#6ce044" stroke-width="2.3" stroke-linecap="round"/><line x1="501.0" y1="268.6" x2="501.0" y2="290.0" stroke="#20a8f0" stroke-width="2.3" stroke-linecap="round"/><line x1="501.0" y1="268.6" x2="531.0" y2="274.3" stroke="#20a8f0" stroke-width="2.3" stroke-linecap="round"/><line x1="501.0" y1="290.0" x2="529.0" y2="294.3" stroke="#20a8f0" stroke-width="2.3" stroke-linecap="round"/><line x1="115.0" y1="365.0" x2="166.0" y2="389.0" stroke="#2a70f0" stroke-width="2.3" stroke-linecap="round"/><line x1="122.0" y1="402.0" x2="164.0" y2="356.0" stroke="#2a70f0" stroke-width="2.3" stroke-linecap="round"/><line x1="115.0" y1="365.0" x2="164.0" y2="356.0" stroke="#2a70f0" stroke-width="3.2" stroke-linecap="round"/><line x1="122.0" y1="402.0" x2="166.0" y2="389.0" stroke="#2a70f0" stroke-width="3.2" stroke-linecap="round"/><line x1="164.0" y1="356.0" x2="209.0" y2="380.0" stroke="#20d0c8" stroke-width="2.3" stroke-linecap="round"/><line x1="166.0" y1="389.0" x2="207.0" y2="349.0" stroke="#20d0c8" stroke-width="2.3" stroke-linecap="round"/><line x1="164.0" y1="356.0" x2="207.0" y2="349.0" stroke="#20d0c8" stroke-width="3.2" stroke-linecap="round"/><line x1="166.0" y1="389.0" x2="209.0" y2="380.0" stroke="#20d0c8" stroke-width="3.2" stroke-linecap="round"/><line x1="207.0" y1="349.0" x2="245.0" y2="372.0" stroke="#30d838" stroke-width="2.3" stroke-linecap="round"/><line x1="209.0" y1="380.0" x2="245.0" y2="342.4" stroke="#30d838" stroke-width="2.3" stroke-linecap="round"/><line x1="207.0" y1="349.0" x2="245.0" y2="342.4" stroke="#30d838" stroke-width="3.2" stroke-linecap="round"/><line x1="209.0" y1="380.0" x2="245.0" y2="372.0" stroke="#30d838" stroke-width="3.2" stroke-linecap="round"/><line x1="245.0" y1="342.4" x2="280.0" y2="363.0" stroke="#d8cc18" stroke-width="2.3" stroke-linecap="round"/><line x1="245.0" y1="372.0" x2="279.0" y2="335.7" stroke="#d8cc18" stroke-width="2.3" stroke-linecap="round"/><line x1="245.0" y1="342.4" x2="279.0" y2="335.7" stroke="#d8cc18" stroke-width="3.2" stroke-linecap="round"/><line x1="245.0" y1="372.0" x2="280.0" y2="363.0" stroke="#d8cc18" stroke-width="3.2" stroke-linecap="round"/><line x1="279.0" y1="335.7" x2="317.0" y2="355.0" stroke="#f09020" stroke-width="2.3" stroke-linecap="round"/><line x1="280.0" y1="363.0" x2="319.0" y2="329.0" stroke="#f09020" stroke-width="2.3" stroke-linecap="round"/><line x1="279.0" y1="335.7" x2="319.0" y2="329.0" stroke="#f09020" stroke-width="3.2" stroke-linecap="round"/><line x1="280.0" y1="363.0" x2="317.0" y2="355.0" stroke="#f09020" stroke-width="3.2" stroke-linecap="round"/><line x1="319.0" y1="329.0" x2="344.0" y2="348.6" stroke="#f03c20" stroke-width="2.3" stroke-linecap="round"/><line x1="317.0" y1="355.0" x2="346.0" y2="323.0" stroke="#f03c20" stroke-width="2.3" stroke-linecap="round"/><line x1="319.0" y1="329.0" x2="346.0" y2="323.0" stroke="#f03c20" stroke-width="3.2" stroke-linecap="round"/><line x1="317.0" y1="355.0" x2="344.0" y2="348.6" stroke="#f03c20" stroke-width="3.2" stroke-linecap="round"/><line x1="346.0" y1="323.0" x2="370.0" y2="341.0" stroke="#e01860" stroke-width="2.3" stroke-linecap="round"/><line x1="344.0" y1="348.6" x2="369.0" y2="317.0" stroke="#e01860" stroke-width="2.3" stroke-linecap="round"/><line x1="346.0" y1="323.0" x2="369.0" y2="317.0" stroke="#e01860" stroke-width="3.2" stroke-linecap="round"/><line x1="344.0" y1="348.6" x2="370.0" y2="341.0" stroke="#e01860" stroke-width="3.2" stroke-linecap="round"/><line x1="369.0" y1="317.0" x2="391.0" y2="335.0" stroke="#d020a0" stroke-width="2.3" stroke-linecap="round"/><line x1="370.0" y1="341.0" x2="391.0" y2="311.4" stroke="#d020a0" stroke-width="2.3" stroke-linecap="round"/><line x1="369.0" y1="317.0" x2="391.0" y2="311.4" stroke="#d020a0" stroke-width="3.2" stroke-linecap="round"/><line x1="370.0" y1="341.0" x2="391.0" y2="335.0" stroke="#d020a0" stroke-width="3.2" stroke-linecap="round"/><line x1="391.0" y1="311.4" x2="414.0" y2="328.6" stroke="#c028c0" stroke-width="2.3" stroke-linecap="round"/><line x1="391.0" y1="335.0" x2="412.0" y2="305.7" stroke="#c028c0" stroke-width="2.3" stroke-linecap="round"/><line x1="391.0" y1="311.4" x2="412.0" y2="305.7" stroke="#c028c0" stroke-width="3.2" stroke-linecap="round"/><line x1="391.0" y1="335.0" x2="414.0" y2="328.6" stroke="#c028c0" stroke-width="3.2" stroke-linecap="round"/><line x1="412.0" y1="305.7" x2="439.0" y2="322.0" stroke="#d02090" stroke-width="2.3" stroke-linecap="round"/><line x1="414.0" y1="328.6" x2="437.0" y2="299.0" stroke="#d02090" stroke-width="2.3" stroke-linecap="round"/><line x1="412.0" y1="305.7" x2="437.0" y2="299.0" stroke="#d02090" stroke-width="3.2" stroke-linecap="round"/><line x1="414.0" y1="328.6" x2="439.0" y2="322.0" stroke="#d02090" stroke-width="3.2" stroke-linecap="round"/><line x1="437.0" y1="299.0" x2="459.0" y2="315.0" stroke="#e81838" stroke-width="2.3" stroke-linecap="round"/><line x1="439.0" y1="322.0" x2="458.0" y2="293.3" stroke="#e81838" stroke-width="2.3" stroke-linecap="round"/><line x1="437.0" y1="299.0" x2="458.0" y2="293.3" stroke="#e81838" stroke-width="3.2" stroke-linecap="round"/><line x1="439.0" y1="322.0" x2="459.0" y2="315.0" stroke="#e81838" stroke-width="3.2" stroke-linecap="round"/><line x1="458.0" y1="293.3" x2="477.0" y2="308.6" stroke="#f05018" stroke-width="2.3" stroke-linecap="round"/><line x1="459.0" y1="315.0" x2="475.0" y2="287.6" stroke="#f05018" stroke-width="2.3" stroke-linecap="round"/><line x1="458.0" y1="293.3" x2="475.0" y2="287.6" stroke="#f05018" stroke-width="3.2" stroke-linecap="round"/><line x1="459.0" y1="315.0" x2="477.0" y2="308.6" stroke="#f05018" stroke-width="3.2" stroke-linecap="round"/><line x1="475.0" y1="287.6" x2="492.0" y2="303.0" stroke="#f0a000" stroke-width="2.3" stroke-linecap="round"/><line x1="477.0" y1="308.6" x2="490.0" y2="283.0" stroke="#f0a000" stroke-width="2.3" stroke-linecap="round"/><line x1="475.0" y1="287.6" x2="490.0" y2="283.0" stroke="#f0a000" stroke-width="3.2" stroke-linecap="round"/><line x1="477.0" y1="308.6" x2="492.0" y2="303.0" stroke="#f0a000" stroke-width="3.2" stroke-linecap="round"/><line x1="490.0" y1="283.0" x2="511.0" y2="298.0" stroke="#a8e018" stroke-width="2.3" stroke-linecap="round"/><line x1="492.0" y1="303.0" x2="511.0" y2="278.0" stroke="#a8e018" stroke-width="2.3" stroke-linecap="round"/><line x1="490.0" y1="283.0" x2="511.0" y2="278.0" stroke="#a8e018" stroke-width="3.2" stroke-linecap="round"/><line x1="492.0" y1="303.0" x2="511.0" y2="298.0" stroke="#a8e018" stroke-width="3.2" stroke-linecap="round"/><line x1="511.0" y1="278.0" x2="529.0" y2="294.3" stroke="#30e070" stroke-width="2.3" stroke-linecap="round"/><line x1="511.0" y1="298.0" x2="531.0" y2="274.3" stroke="#30e070" stroke-width="2.3" stroke-linecap="round"/><line x1="511.0" y1="278.0" x2="531.0" y2="274.3" stroke="#30e070" stroke-width="3.2" stroke-linecap="round"/><line x1="511.0" y1="298.0" x2="529.0" y2="294.3" stroke="#30e070" stroke-width="3.2" stroke-linecap="round"/><line x1="115.0" y1="365.0" x2="122.0" y2="402.0" stroke="#2a70f0" stroke-width="2.3" stroke-linecap="round"/><line x1="164.0" y1="356.0" x2="166.0" y2="389.0" stroke="#25a0dc" stroke-width="2.3" stroke-linecap="round"/><line x1="207.0" y1="349.0" x2="209.0" y2="380.0" stroke="#28d480" stroke-width="2.3" stroke-linecap="round"/><line x1="245.0" y1="342.4" x2="245.0" y2="372.0" stroke="#84d228" stroke-width="2.3" stroke-linecap="round"/><line x1="279.0" y1="335.7" x2="280.0" y2="363.0" stroke="#e4ae1c" stroke-width="2.3" stroke-linecap="round"/><line x1="319.0" y1="329.0" x2="317.0" y2="355.0" stroke="#f06620" stroke-width="2.3" stroke-linecap="round"/><line x1="346.0" y1="323.0" x2="344.0" y2="348.6" stroke="#e82a40" stroke-width="2.3" stroke-linecap="round"/><line x1="369.0" y1="317.0" x2="370.0" y2="341.0" stroke="#d81c80" stroke-width="2.3" stroke-linecap="round"/><line x1="391.0" y1="311.4" x2="391.0" y2="335.0" stroke="#c824b0" stroke-width="2.3" stroke-linecap="round"/><line x1="412.0" y1="305.7" x2="414.0" y2="328.6" stroke="#c824a8" stroke-width="2.3" stroke-linecap="round"/><line x1="437.0" y1="299.0" x2="439.0" y2="322.0" stroke="#dc1c64" stroke-width="2.3" stroke-linecap="round"/><line x1="458.0" y1="293.3" x2="459.0" y2="315.0" stroke="#ec3428" stroke-width="2.3" stroke-linecap="round"/><line x1="475.0" y1="287.6" x2="477.0" y2="308.6" stroke="#f0780c" stroke-width="2.3" stroke-linecap="round"/><line x1="490.0" y1="283.0" x2="492.0" y2="303.0" stroke="#ccc00c" stroke-width="2.3" stroke-linecap="round"/><line x1="511.0" y1="278.0" x2="511.0" y2="298.0" stroke="#6ce044" stroke-width="2.3" stroke-linecap="round"/><line x1="531.0" y1="274.3" x2="529.0" y2="294.3" stroke="#20a8f0" stroke-width="2.3" stroke-linecap="round"/><circle cx="138.0" cy="344.7" r="1.5" fill="#2a2a90"/><circle cx="181.0" cy="338.3" r="1.5" fill="#2a2a90"/><circle cx="218.0" cy="332.8" r="1.5" fill="#2a2a90"/><circle cx="253.0" cy="327.3" r="1.5" fill="#2a2a90"/><circle cx="286.0" cy="322.0" r="1.5" fill="#2a2a90"/><circle cx="318.0" cy="316.2" r="1.5" fill="#2a2a90"/><circle cx="345.0" cy="311.0" r="1.5" fill="#2a2a90"/><circle cx="368.0" cy="305.7" r="1.5" fill="#2a2a90"/><circle cx="391.0" cy="301.0" r="1.5" fill="#2a2a90"/><circle cx="411.0" cy="295.2" r="1.5" fill="#2a2a90"/><circle cx="436.0" cy="289.5" r="1.5" fill="#2a2a90"/><circle cx="454.0" cy="284.4" r="1.5" fill="#2a2a90"/><circle cx="472.0" cy="279.0" r="1.5" fill="#2a2a90"/><circle cx="489.0" cy="274.3" r="1.5" fill="#2a2a90"/><circle cx="164.0" cy="356.0" r="1.5" fill="#2a2a90"/><circle cx="207.0" cy="349.0" r="1.5" fill="#2a2a90"/><circle cx="245.0" cy="342.4" r="1.5" fill="#2a2a90"/><circle cx="279.0" cy="335.7" r="1.5" fill="#2a2a90"/><circle cx="319.0" cy="329.0" r="1.5" fill="#2a2a90"/><circle cx="346.0" cy="323.0" r="1.5" fill="#2a2a90"/><circle cx="369.0" cy="317.0" r="1.5" fill="#2a2a90"/><circle cx="391.0" cy="311.4" r="1.5" fill="#2a2a90"/><circle cx="412.0" cy="305.7" r="1.5" fill="#2a2a90"/><circle cx="437.0" cy="299.0" r="1.5" fill="#2a2a90"/><circle cx="458.0" cy="293.3" r="1.5" fill="#2a2a90"/><circle cx="475.0" cy="287.6" r="1.5" fill="#2a2a90"/><circle cx="490.0" cy="283.0" r="1.5" fill="#2a2a90"/><circle cx="511.0" cy="278.0" r="1.5" fill="#2a2a90"/><circle cx="140.5" cy="375.0" r="1.5" fill="#2a2a90"/><circle cx="182.6" cy="368.5" r="1.5" fill="#2a2a90"/><circle cx="221.0" cy="361.0" r="1.5" fill="#2a2a90"/><circle cx="254.0" cy="354.4" r="1.5" fill="#2a2a90"/><circle cx="285.0" cy="347.6" r="1.5" fill="#2a2a90"/><circle cx="319.8" cy="340.0" r="1.5" fill="#2a2a90"/><circle cx="344.8" cy="335.2" r="1.5" fill="#2a2a90"/><circle cx="368.6" cy="328.6" r="1.5" fill="#2a2a90"/><circle cx="391.4" cy="322.9" r="1.5" fill="#2a2a90"/><circle cx="414.3" cy="317.0" r="1.5" fill="#2a2a90"/><circle cx="436.0" cy="310.5" r="1.5" fill="#2a2a90"/><circle cx="455.0" cy="305.4" r="1.5" fill="#2a2a90"/><circle cx="473.0" cy="300.0" r="1.5" fill="#2a2a90"/><circle cx="489.0" cy="294.8" r="1.5" fill="#2a2a90"/><circle cx="166.0" cy="389.0" r="1.5" fill="#2a2a90"/><circle cx="209.0" cy="380.0" r="1.5" fill="#2a2a90"/><circle cx="245.0" cy="372.0" r="1.5" fill="#2a2a90"/><circle cx="280.0" cy="363.0" r="1.5" fill="#2a2a90"/><circle cx="317.0" cy="355.0" r="1.5" fill="#2a2a90"/><circle cx="344.0" cy="348.6" r="1.5" fill="#2a2a90"/><circle cx="370.0" cy="341.0" r="1.5" fill="#2a2a90"/><circle cx="391.0" cy="335.0" r="1.5" fill="#2a2a90"/><circle cx="414.0" cy="328.6" r="1.5" fill="#2a2a90"/><circle cx="439.0" cy="322.0" r="1.5" fill="#2a2a90"/><circle cx="459.0" cy="315.0" r="1.5" fill="#2a2a90"/><circle cx="477.0" cy="308.6" r="1.5" fill="#2a2a90"/><circle cx="492.0" cy="303.0" r="1.5" fill="#2a2a90"/><circle cx="511.0" cy="298.0" r="1.5" fill="#2a2a90"/><circle cx="214" cy="341" r="1.8" fill="#151515"/><circle cx="215" cy="347" r="1.8" fill="#151515"/><circle cx="216" cy="353.6" r="1.8" fill="#151515"/><circle cx="216.5" cy="378" r="1.8" fill="#151515"/><circle cx="217" cy="385" r="1.8" fill="#151515"/><circle cx="243.4" cy="335.7" r="1.8" fill="#151515"/><circle cx="244" cy="377.6" r="1.8" fill="#151515"/><circle cx="303" cy="326" r="1.8" fill="#151515"/><circle cx="303" cy="358" r="1.8" fill="#151515"/><circle cx="303" cy="364" r="1.8" fill="#151515"/><circle cx="325" cy="322" r="1.8" fill="#151515"/><circle cx="325" cy="327.5" r="1.8" fill="#151515"/><circle cx="325" cy="359" r="1.8" fill="#151515"/><circle cx="372.4" cy="311.4" r="1.8" fill="#151515"/><circle cx="371.4" cy="345.7" r="1.8" fill="#151515"/><circle cx="389.5" cy="308.6" r="1.8" fill="#151515"/><circle cx="388.6" cy="341" r="1.8" fill="#151515"/><circle cx="428.6" cy="298" r="1.8" fill="#151515"/><circle cx="427.6" cy="328.6" r="1.8" fill="#151515"/><circle cx="443.8" cy="294.3" r="1.8" fill="#151515"/><circle cx="443.8" cy="324.8" r="1.8" fill="#151515"/><circle cx="478" cy="284.8" r="1.8" fill="#151515"/><circle cx="477" cy="312.4" r="1.8" fill="#151515"/><circle cx="490.5" cy="280" r="1.8" fill="#151515"/><circle cx="490.5" cy="308.6" r="1.8" fill="#151515"/><circle cx="270" cy="331" r="1.8" fill="#151515"/><circle cx="270" cy="368" r="1.8" fill="#151515"/><circle cx="350" cy="318" r="1.8" fill="#151515"/><circle cx="350" cy="351" r="1.8" fill="#151515"/><circle cx="405" cy="304" r="1.8" fill="#151515"/><circle cx="405" cy="336" r="1.8" fill="#151515"/><circle cx="460" cy="290" r="1.8" fill="#151515"/><circle cx="460" cy="319" r="1.8" fill="#151515"/><line x1="501.0" y1="268.6" x2="531.0" y2="274.3" stroke="#2860f0" stroke-width="3" stroke-linecap="round"/><line x1="501.0" y1="290.0" x2="529.0" y2="294.3" stroke="#2f55e8" stroke-width="5" stroke-linecap="round"/><line x1="501.0" y1="268.6" x2="529.0" y2="294.3" stroke="#20c0f0" stroke-width="2" stroke-linecap="round"/><line x1="531.0" y1="274.3" x2="501.0" y2="290.0" stroke="#20c0f0" stroke-width="2" stroke-linecap="round"/><line x1="501.0" y1="268.0" x2="499.5" y2="330.0" stroke="#2d3de6" stroke-width="7" stroke-linecap="butt"/><line x1="499.9" y1="268.0" x2="498.4" y2="330.0" stroke="#5a78f5" stroke-width="1.75" stroke-linecap="butt" opacity="0.7"/><line x1="531.0" y1="273.0" x2="535.0" y2="340.0" stroke="#2f4ae8" stroke-width="7" stroke-linecap="butt"/><line x1="530.0" y1="273.0" x2="534.0" y2="340.0" stroke="#6080f5" stroke-width="1.75" stroke-linecap="butt" opacity="0.7"/><ellipse cx="501" cy="268.5" rx="3.8" ry="1.8" fill="#1a2080"/><ellipse cx="531.5" cy="274" rx="3.8" ry="1.8" fill="#1a2080"/><line x1="84.0" y1="351.0" x2="131.0" y2="551.0" stroke="#2f3fe0" stroke-width="10" stroke-linecap="butt"/><line x1="82.5" y1="351.0" x2="129.5" y2="551.0" stroke="#6a86f2" stroke-width="2.5" stroke-linecap="butt" opacity="0.7"/><line x1="86.0" y1="352.0" x2="119.0" y2="367.0" stroke="#2d45e0" stroke-width="3" stroke-linecap="round"/><line x1="88.0" y1="388.0" x2="123.0" y2="406.0" stroke="#3050e8" stroke-width="7" stroke-linecap="round"/><line x1="86.0" y1="384.0" x2="121.0" y2="402.0" stroke="#6080f0" stroke-width="1.5" stroke-linecap="round" opacity="0.6"/><line x1="86.0" y1="355.0" x2="120.0" y2="400.0" stroke="#2030c0" stroke-width="2" stroke-linecap="round"/><line x1="119.0" y1="370.0" x2="87.0" y2="386.0" stroke="#2030c0" stroke-width="2" stroke-linecap="round"/><line x1="118.0" y1="366.0" x2="169.0" y2="589.0" stroke="#3450e6" stroke-width="11" stroke-linecap="butt"/><line x1="116.3" y1="366.0" x2="167.3" y2="589.0" stroke="#7090f5" stroke-width="2.75" stroke-linecap="butt" opacity="0.7"/><ellipse cx="84" cy="351" rx="5" ry="2.5" fill="#2535c0"/><ellipse cx="118" cy="366" rx="5.5" ry="2.8" fill="#2a40c8"/><path d="M119 560L145 549L146.3 558.8L121.1 571Z" fill="none" stroke="#60e050" stroke-width="1.2"/><path d="M128.6 553L139.5 570.3L141 556Z" fill="none" stroke="#60e050" stroke-width="1.1"/><path d="M157 600.3L184.4 587.3L185.7 596.9L159.2 611.2Z" fill="none" stroke="#60e050" stroke-width="1.2"/><path d="M169.4 591L178.9 611L180 594Z" fill="none" stroke="#60e050" stroke-width="1.1"/><line x1="125.0" y1="546.0" x2="122.0" y2="549.0" stroke="#222" stroke-width="1" stroke-linecap="round"/><line x1="137.0" y1="545.0" x2="140.0" y2="543.0" stroke="#222" stroke-width="1" stroke-linecap="round"/><line x1="163.0" y1="586.0" x2="161.0" y2="589.0" stroke="#222" stroke-width="1" stroke-linecap="round"/><line x1="174.0" y1="583.0" x2="177.0" y2="581.0" stroke="#222" stroke-width="1" stroke-linecap="round"/><ellipse cx="497.6" cy="390.2" rx="4.2" ry="3.2" fill="none" stroke="#58e048" stroke-width="1.6"/><path d="M491.6 387.2l2 6h9l2-6" fill="none" stroke="#58e048" stroke-width="1"/><line x1="490.6" y1="381.2" x2="493.6" y2="384.2" stroke="#333" stroke-width="1.1" stroke-linecap="round"/><line x1="503.6" y1="381.2" x2="501.6" y2="383.2" stroke="#333" stroke-width="1.1" stroke-linecap="round"/><circle cx="498.1" cy="384.2" r="1.6" fill="#1a1a60"/><ellipse cx="538" cy="400.8" rx="4.2" ry="3.2" fill="none" stroke="#58e048" stroke-width="1.6"/><path d="M532 397.8l2 6h9l2-6" fill="none" stroke="#58e048" stroke-width="1"/><line x1="531.0" y1="391.8" x2="534.0" y2="394.8" stroke="#333" stroke-width="1.1" stroke-linecap="round"/><line x1="544.0" y1="391.8" x2="542.0" y2="393.8" stroke="#333" stroke-width="1.1" stroke-linecap="round"/><circle cx="538.5" cy="394.8" r="1.6" fill="#1a1a60"/><line x1="161.0" y1="578.0" x2="198.0" y2="560.0" stroke="#30d8f0" stroke-width="1.2" stroke-linecap="round"/><line x1="161.0" y1="578.0" x2="144.0" y2="562.0" stroke="#30d8f0" stroke-width="1.2" stroke-linecap="round"/><line x1="161.0" y1="578.0" x2="153.0" y2="536.0" stroke="#30d8f0" stroke-width="1.2" stroke-linecap="round"/><path d="M144 562l1 5 4-3z" fill="#30d8f0"/><path d="M153 536l-2 4 4 0z" fill="#30d8f0"/><text x="150" y="546" font-size="8" fill="#30d8f0" font-family="Liberation Sans" transform="rotate(-70 152 544)">Z</text><path d="M163 568l-3 -4 -1 6z" fill="#e8e040" opacity="0.8"/><path d="M198 560l-6 0 3 5z" fill="#30d8f0"/><text x="200" y="561" font-size="9" fill="#30d8f0" font-family="Liberation Sans">X</text><ellipse cx="164" cy="568" rx="5" ry="6" fill="#a8d8f0" opacity="0.6"/></svg>
<svg class="a" style="left:-3px;top:-2px" width="1366" height="735" viewBox="0 0 1366 735"><polygon points="866.0,348.0 881.5,344.2 897.9,340.1 915.3,335.7 933.8,331.1 953.4,326.3 974.3,321.1 996.4,315.6 1019.9,309.7 1044.8,303.5 1071.3,296.9 1099.4,289.9 1129.2,282.5 1160.8,274.7 1194.5,266.3 1230.1,257.4 1268.0,248.0 1291.0,262.0 1253.9,270.5 1218.9,278.5 1186.0,286.0 1155.0,293.1 1125.7,299.8 1098.2,306.0 1072.3,312.0 1047.8,317.5 1024.8,322.8 1003.1,327.8 982.7,332.4 963.4,336.8 945.3,341.0 928.2,344.9 912.2,348.5 897.0,352.0" fill="#5c7878" opacity="0.5"/><line x1="1268.0" y1="250.0" x2="1270.0" y2="487.0" stroke="#3a3ae6" stroke-width="12" stroke-linecap="butt"/><line x1="1266.2" y1="250.0" x2="1268.2" y2="487.0" stroke="#6a6af5" stroke-width="3.0" stroke-linecap="butt" opacity="0.7"/><line x1="867.0" y1="366.0" x2="912.2" y2="367.1" stroke="#50d8ea" stroke-width="1.4" stroke-linecap="round"/><line x1="866.0" y1="348.0" x2="882.4" y2="362.9" stroke="#c84848" stroke-width="1.5" stroke-linecap="round"/><line x1="867.0" y1="366.0" x2="881.5" y2="344.2" stroke="#d04040" stroke-width="1.3" stroke-linecap="round"/><line x1="882.4" y1="362.9" x2="928.2" y2="364.1" stroke="#50d8ea" stroke-width="1.4" stroke-linecap="round"/><line x1="881.5" y1="344.2" x2="882.4" y2="362.9" stroke="#c84848" stroke-width="1.5" stroke-linecap="round"/><line x1="882.4" y1="362.9" x2="897.9" y2="340.1" stroke="#e6e060" stroke-width="1.3" stroke-linecap="round"/><line x1="898.8" y1="359.6" x2="945.3" y2="360.8" stroke="#50d8ea" stroke-width="1.4" stroke-linecap="round"/><line x1="897.9" y1="340.1" x2="916.2" y2="356.1" stroke="#c84848" stroke-width="1.5" stroke-linecap="round"/><line x1="898.8" y1="359.6" x2="915.3" y2="335.7" stroke="#d04040" stroke-width="1.3" stroke-linecap="round"/><line x1="916.2" y1="356.1" x2="963.4" y2="357.4" stroke="#50d8ea" stroke-width="1.4" stroke-linecap="round"/><line x1="915.3" y1="335.7" x2="916.2" y2="356.1" stroke="#c84848" stroke-width="1.5" stroke-linecap="round"/><line x1="916.2" y1="356.1" x2="933.8" y2="331.1" stroke="#d04040" stroke-width="1.3" stroke-linecap="round"/><line x1="934.6" y1="352.3" x2="982.7" y2="353.7" stroke="#50d8ea" stroke-width="1.4" stroke-linecap="round"/><line x1="933.8" y1="331.1" x2="954.2" y2="348.4" stroke="#c84848" stroke-width="1.5" stroke-linecap="round"/><line x1="934.6" y1="352.3" x2="953.4" y2="326.3" stroke="#e6e060" stroke-width="1.3" stroke-linecap="round"/><line x1="954.2" y1="348.4" x2="1003.1" y2="349.8" stroke="#50d8ea" stroke-width="1.4" stroke-linecap="round"/><line x1="953.4" y1="326.3" x2="954.2" y2="348.4" stroke="#c84848" stroke-width="1.5" stroke-linecap="round"/><line x1="954.2" y1="348.4" x2="974.3" y2="321.1" stroke="#d04040" stroke-width="1.3" stroke-linecap="round"/><line x1="975.0" y1="344.2" x2="1024.8" y2="345.7" stroke="#50d8ea" stroke-width="1.4" stroke-linecap="round"/><line x1="974.3" y1="321.1" x2="997.1" y2="339.7" stroke="#c84848" stroke-width="1.5" stroke-linecap="round"/><line x1="975.0" y1="344.2" x2="996.4" y2="315.6" stroke="#d04040" stroke-width="1.3" stroke-linecap="round"/><line x1="997.1" y1="339.7" x2="1047.8" y2="341.3" stroke="#50d8ea" stroke-width="1.4" stroke-linecap="round"/><line x1="996.4" y1="315.6" x2="997.1" y2="339.7" stroke="#c84848" stroke-width="1.5" stroke-linecap="round"/><line x1="997.1" y1="339.7" x2="1019.9" y2="309.7" stroke="#e6e060" stroke-width="1.3" stroke-linecap="round"/><line x1="1020.5" y1="335.0" x2="1072.3" y2="336.6" stroke="#50d8ea" stroke-width="1.4" stroke-linecap="round"/><line x1="1019.9" y1="309.7" x2="1045.4" y2="330.0" stroke="#c84848" stroke-width="1.5" stroke-linecap="round"/><line x1="1020.5" y1="335.0" x2="1044.8" y2="303.5" stroke="#d04040" stroke-width="1.3" stroke-linecap="round"/><line x1="1045.4" y1="330.0" x2="1098.2" y2="331.7" stroke="#50d8ea" stroke-width="1.4" stroke-linecap="round"/><line x1="1044.8" y1="303.5" x2="1045.4" y2="330.0" stroke="#c84848" stroke-width="1.5" stroke-linecap="round"/><line x1="1045.4" y1="330.0" x2="1071.3" y2="296.9" stroke="#d04040" stroke-width="1.3" stroke-linecap="round"/><line x1="1071.8" y1="324.6" x2="1125.7" y2="326.5" stroke="#50d8ea" stroke-width="1.4" stroke-linecap="round"/><line x1="1071.3" y1="296.9" x2="1099.8" y2="319.0" stroke="#c84848" stroke-width="1.5" stroke-linecap="round"/><line x1="1071.8" y1="324.6" x2="1099.4" y2="289.9" stroke="#e6e060" stroke-width="1.3" stroke-linecap="round"/><line x1="1099.8" y1="319.0" x2="1155.0" y2="320.9" stroke="#50d8ea" stroke-width="1.4" stroke-linecap="round"/><line x1="1099.4" y1="289.9" x2="1099.8" y2="319.0" stroke="#c84848" stroke-width="1.5" stroke-linecap="round"/><line x1="1099.8" y1="319.0" x2="1129.2" y2="282.5" stroke="#d04040" stroke-width="1.3" stroke-linecap="round"/><line x1="1129.5" y1="313.0" x2="1186.0" y2="315.0" stroke="#50d8ea" stroke-width="1.4" stroke-linecap="round"/><line x1="1129.2" y1="282.5" x2="1161.1" y2="306.6" stroke="#c84848" stroke-width="1.5" stroke-linecap="round"/><line x1="1129.5" y1="313.0" x2="1160.8" y2="274.7" stroke="#d04040" stroke-width="1.3" stroke-linecap="round"/><line x1="1161.1" y1="306.6" x2="1218.9" y2="308.7" stroke="#50d8ea" stroke-width="1.4" stroke-linecap="round"/><line x1="1160.8" y1="274.7" x2="1161.1" y2="306.6" stroke="#c84848" stroke-width="1.5" stroke-linecap="round"/><line x1="1161.1" y1="306.6" x2="1194.5" y2="266.3" stroke="#e6e060" stroke-width="1.3" stroke-linecap="round"/><line x1="1194.6" y1="299.8" x2="1253.9" y2="302.1" stroke="#50d8ea" stroke-width="1.4" stroke-linecap="round"/><line x1="1194.5" y1="266.3" x2="1230.2" y2="292.6" stroke="#c84848" stroke-width="1.5" stroke-linecap="round"/><line x1="1194.6" y1="299.8" x2="1230.1" y2="257.4" stroke="#d04040" stroke-width="1.3" stroke-linecap="round"/><line x1="1230.2" y1="292.6" x2="1291.0" y2="295.0" stroke="#50d8ea" stroke-width="1.4" stroke-linecap="round"/><line x1="1230.1" y1="257.4" x2="1230.2" y2="292.6" stroke="#c84848" stroke-width="1.5" stroke-linecap="round"/><line x1="1230.2" y1="292.6" x2="1268.0" y2="248.0" stroke="#d04040" stroke-width="1.3" stroke-linecap="round"/><line x1="866.0" y1="348.0" x2="867.0" y2="366.0" stroke="#ee3a3a" stroke-width="1.9" stroke-linecap="round"/><line x1="866.0" y1="348.0" x2="897.0" y2="352.0" stroke="#303030" stroke-width="0.9" stroke-linecap="round"/><line x1="881.5" y1="344.2" x2="882.4" y2="362.9" stroke="#ee3a3a" stroke-width="1.9" stroke-linecap="round"/><line x1="881.5" y1="344.2" x2="912.2" y2="348.5" stroke="#303030" stroke-width="0.9" stroke-linecap="round"/><line x1="897.9" y1="340.1" x2="898.8" y2="359.6" stroke="#ee3a3a" stroke-width="1.9" stroke-linecap="round"/><line x1="897.9" y1="340.1" x2="928.2" y2="344.9" stroke="#303030" stroke-width="0.9" stroke-linecap="round"/><line x1="915.3" y1="335.7" x2="916.2" y2="356.1" stroke="#ee3a3a" stroke-width="1.9" stroke-linecap="round"/><line x1="915.3" y1="335.7" x2="945.3" y2="341.0" stroke="#303030" stroke-width="0.9" stroke-linecap="round"/><line x1="933.8" y1="331.1" x2="934.6" y2="352.3" stroke="#ee3a3a" stroke-width="1.9" stroke-linecap="round"/><line x1="933.8" y1="331.1" x2="963.4" y2="336.8" stroke="#303030" stroke-width="0.9" stroke-linecap="round"/><line x1="953.4" y1="326.3" x2="954.2" y2="348.4" stroke="#ee3a3a" stroke-width="1.9" stroke-linecap="round"/><line x1="953.4" y1="326.3" x2="982.7" y2="332.4" stroke="#303030" stroke-width="0.9" stroke-linecap="round"/><line x1="974.3" y1="321.1" x2="975.0" y2="344.2" stroke="#ee3a3a" stroke-width="1.9" stroke-linecap="round"/><line x1="974.3" y1="321.1" x2="1003.1" y2="327.8" stroke="#303030" stroke-width="0.9" stroke-linecap="round"/><line x1="996.4" y1="315.6" x2="997.1" y2="339.7" stroke="#ee3a3a" stroke-width="1.9" stroke-linecap="round"/><line x1="996.4" y1="315.6" x2="1024.8" y2="322.8" stroke="#303030" stroke-width="0.9" stroke-linecap="round"/><line x1="1019.9" y1="309.7" x2="1020.5" y2="335.0" stroke="#ee3a3a" stroke-width="1.9" stroke-linecap="round"/><line x1="1019.9" y1="309.7" x2="1047.8" y2="317.5" stroke="#303030" stroke-width="0.9" stroke-linecap="round"/><line x1="1044.8" y1="303.5" x2="1045.4" y2="330.0" stroke="#ee3a3a" stroke-width="1.9" stroke-linecap="round"/><line x1="1044.8" y1="303.5" x2="1072.3" y2="312.0" stroke="#303030" stroke-width="0.9" stroke-linecap="round"/><line x1="1071.3" y1="296.9" x2="1071.8" y2="324.6" stroke="#ee3a3a" stroke-width="1.9" stroke-linecap="round"/><line x1="1071.3" y1="296.9" x2="1098.2" y2="306.0" stroke="#303030" stroke-width="0.9" stroke-linecap="round"/><line x1="1099.4" y1="289.9" x2="1099.8" y2="319.0" stroke="#ee3a3a" stroke-width="1.9" stroke-linecap="round"/><line x1="1099.4" y1="289.9" x2="1125.7" y2="299.8" stroke="#303030" stroke-width="0.9" stroke-linecap="round"/><line x1="1129.2" y1="282.5" x2="1129.5" y2="313.0" stroke="#ee3a3a" stroke-width="1.9" stroke-linecap="round"/><line x1="1129.2" y1="282.5" x2="1155.0" y2="293.1" stroke="#303030" stroke-width="0.9" stroke-linecap="round"/><line x1="1160.8" y1="274.7" x2="1161.1" y2="306.6" stroke="#ee3a3a" stroke-width="1.9" stroke-linecap="round"/><line x1="1160.8" y1="274.7" x2="1186.0" y2="286.0" stroke="#303030" stroke-width="0.9" stroke-linecap="round"/><line x1="1194.5" y1="266.3" x2="1194.6" y2="299.8" stroke="#ee3a3a" stroke-width="1.9" stroke-linecap="round"/><line x1="1194.5" y1="266.3" x2="1218.9" y2="278.5" stroke="#303030" stroke-width="0.9" stroke-linecap="round"/><line x1="1230.1" y1="257.4" x2="1230.2" y2="292.6" stroke="#ee3a3a" stroke-width="1.9" stroke-linecap="round"/><line x1="1230.1" y1="257.4" x2="1253.9" y2="270.5" stroke="#303030" stroke-width="0.9" stroke-linecap="round"/><line x1="1268.0" y1="248.0" x2="1268.0" y2="285.0" stroke="#ee3a3a" stroke-width="1.9" stroke-linecap="round"/><line x1="1268.0" y1="248.0" x2="1291.0" y2="262.0" stroke="#303030" stroke-width="0.9" stroke-linecap="round"/><line x1="866.0" y1="348.0" x2="1268.0" y2="248.0" stroke="#d038d8" stroke-width="3.4" stroke-linecap="round"/><line x1="867.0" y1="366.0" x2="1268.0" y2="285.0" stroke="#d038d8" stroke-width="3.4" stroke-linecap="round"/><line x1="897.0" y1="352.0" x2="1291.0" y2="262.0" stroke="#553060" stroke-width="1.6" stroke-linecap="round"/><line x1="897.0" y1="352.0" x2="912.2" y2="367.1" stroke="#ee3a3a" stroke-width="1.8" stroke-linecap="round"/><line x1="897.0" y1="370.0" x2="912.2" y2="348.5" stroke="#ee3a3a" stroke-width="1.8" stroke-linecap="round"/><line x1="912.2" y1="348.5" x2="928.2" y2="364.1" stroke="#e6e060" stroke-width="1.5" stroke-linecap="round"/><line x1="928.2" y1="344.9" x2="945.3" y2="360.8" stroke="#ee3a3a" stroke-width="1.8" stroke-linecap="round"/><line x1="928.2" y1="364.1" x2="945.3" y2="341.0" stroke="#ee3a3a" stroke-width="1.8" stroke-linecap="round"/><line x1="945.3" y1="341.0" x2="963.4" y2="357.4" stroke="#e84848" stroke-width="1.5" stroke-linecap="round"/><line x1="963.4" y1="336.8" x2="982.7" y2="353.7" stroke="#ee3a3a" stroke-width="1.8" stroke-linecap="round"/><line x1="963.4" y1="357.4" x2="982.7" y2="332.4" stroke="#ee3a3a" stroke-width="1.8" stroke-linecap="round"/><line x1="982.7" y1="332.4" x2="1003.1" y2="349.8" stroke="#e6e060" stroke-width="1.5" stroke-linecap="round"/><line x1="1003.1" y1="327.8" x2="1024.8" y2="345.7" stroke="#ee3a3a" stroke-width="1.8" stroke-linecap="round"/><line x1="1003.1" y1="349.8" x2="1024.8" y2="322.8" stroke="#ee3a3a" stroke-width="1.8" stroke-linecap="round"/><line x1="1024.8" y1="322.8" x2="1047.8" y2="341.3" stroke="#e84848" stroke-width="1.5" stroke-linecap="round"/><line x1="1047.8" y1="317.5" x2="1072.3" y2="336.6" stroke="#ee3a3a" stroke-width="1.8" stroke-linecap="round"/><line x1="1047.8" y1="341.3" x2="1072.3" y2="312.0" stroke="#ee3a3a" stroke-width="1.8" stroke-linecap="round"/><line x1="1072.3" y1="312.0" x2="1098.2" y2="331.7" stroke="#e6e060" stroke-width="1.5" stroke-linecap="round"/><line x1="1098.2" y1="306.0" x2="1125.7" y2="326.5" stroke="#ee3a3a" stroke-width="1.8" stroke-linecap="round"/><line x1="1098.2" y1="331.7" x2="1125.7" y2="299.8" stroke="#ee3a3a" stroke-width="1.8" stroke-linecap="round"/><line x1="1125.7" y1="299.8" x2="1155.0" y2="320.9" stroke="#e84848" stroke-width="1.5" stroke-linecap="round"/><line x1="1155.0" y1="293.1" x2="1186.0" y2="315.0" stroke="#ee3a3a" stroke-width="1.8" stroke-linecap="round"/><line x1="1155.0" y1="320.9" x2="1186.0" y2="286.0" stroke="#ee3a3a" stroke-width="1.8" stroke-linecap="round"/><line x1="1186.0" y1="286.0" x2="1218.9" y2="308.7" stroke="#e6e060" stroke-width="1.5" stroke-linecap="round"/><line x1="1218.9" y1="278.5" x2="1253.9" y2="302.1" stroke="#ee3a3a" stroke-width="1.8" stroke-linecap="round"/><line x1="1218.9" y1="308.7" x2="1253.9" y2="270.5" stroke="#ee3a3a" stroke-width="1.8" stroke-linecap="round"/><line x1="1253.9" y1="270.5" x2="1291.0" y2="295.0" stroke="#e84848" stroke-width="1.5" stroke-linecap="round"/><line x1="897.0" y1="352.0" x2="897.0" y2="370.0" stroke="#ee3a3a" stroke-width="1.9" stroke-linecap="round"/><line x1="912.2" y1="348.5" x2="912.2" y2="367.1" stroke="#ee3a3a" stroke-width="1.9" stroke-linecap="round"/><line x1="928.2" y1="344.9" x2="928.2" y2="364.1" stroke="#ee3a3a" stroke-width="1.9" stroke-linecap="round"/><line x1="945.3" y1="341.0" x2="945.3" y2="360.8" stroke="#ee3a3a" stroke-width="1.9" stroke-linecap="round"/><line x1="963.4" y1="336.8" x2="963.4" y2="357.4" stroke="#ee3a3a" stroke-width="1.9" stroke-linecap="round"/><line x1="982.7" y1="332.4" x2="982.7" y2="353.7" stroke="#ee3a3a" stroke-width="1.9" stroke-linecap="round"/><line x1="1003.1" y1="327.8" x2="1003.1" y2="349.8" stroke="#ee3a3a" stroke-width="1.9" stroke-linecap="round"/><line x1="1024.8" y1="322.8" x2="1024.8" y2="345.7" stroke="#ee3a3a" stroke-width="1.9" stroke-linecap="round"/><line x1="1047.8" y1="317.5" x2="1047.8" y2="341.3" stroke="#ee3a3a" stroke-width="1.9" stroke-linecap="round"/><line x1="1072.3" y1="312.0" x2="1072.3" y2="336.6" stroke="#ee3a3a" stroke-width="1.9" stroke-linecap="round"/><line x1="1098.2" y1="306.0" x2="1098.2" y2="331.7" stroke="#ee3a3a" stroke-width="1.9" stroke-linecap="round"/><line x1="1125.7" y1="299.8" x2="1125.7" y2="326.5" stroke="#ee3a3a" stroke-width="1.9" stroke-linecap="round"/><line x1="1155.0" y1="293.1" x2="1155.0" y2="320.9" stroke="#ee3a3a" stroke-width="1.9" stroke-linecap="round"/><line x1="1186.0" y1="286.0" x2="1186.0" y2="315.0" stroke="#ee3a3a" stroke-width="1.9" stroke-linecap="round"/><line x1="1218.9" y1="278.5" x2="1218.9" y2="308.7" stroke="#ee3a3a" stroke-width="1.9" stroke-linecap="round"/><line x1="1253.9" y1="270.5" x2="1253.9" y2="302.1" stroke="#ee3a3a" stroke-width="1.9" stroke-linecap="round"/><line x1="1291.0" y1="262.0" x2="1291.0" y2="295.0" stroke="#ee3a3a" stroke-width="1.9" stroke-linecap="round"/><line x1="897.0" y1="370.0" x2="1291.0" y2="295.0" stroke="#d038d8" stroke-width="3.6" stroke-linecap="round"/><circle cx="866.0" cy="348.0" r="1.3" fill="#1a1a50"/><circle cx="881.5" cy="344.2" r="1.3" fill="#1a1a50"/><circle cx="897.9" cy="340.1" r="1.3" fill="#1a1a50"/><circle cx="915.3" cy="335.7" r="1.3" fill="#1a1a50"/><circle cx="933.8" cy="331.1" r="1.3" fill="#1a1a50"/><circle cx="953.4" cy="326.3" r="1.3" fill="#1a1a50"/><circle cx="974.3" cy="321.1" r="1.3" fill="#1a1a50"/><circle cx="996.4" cy="315.6" r="1.3" fill="#1a1a50"/><circle cx="1019.9" cy="309.7" r="1.3" fill="#1a1a50"/><circle cx="1044.8" cy="303.5" r="1.3" fill="#1a1a50"/><circle cx="1071.3" cy="296.9" r="1.3" fill="#1a1a50"/><circle cx="1099.4" cy="289.9" r="1.3" fill="#1a1a50"/><circle cx="1129.2" cy="282.5" r="1.3" fill="#1a1a50"/><circle cx="1160.8" cy="274.7" r="1.3" fill="#1a1a50"/><circle cx="1194.5" cy="266.3" r="1.3" fill="#1a1a50"/><circle cx="1230.1" cy="257.4" r="1.3" fill="#1a1a50"/><circle cx="1268.0" cy="248.0" r="1.3" fill="#1a1a50"/><circle cx="897.0" cy="352.0" r="1.3" fill="#1a1a50"/><circle cx="912.2" cy="348.5" r="1.3" fill="#1a1a50"/><circle cx="928.2" cy="344.9" r="1.3" fill="#1a1a50"/><circle cx="945.3" cy="341.0" r="1.3" fill="#1a1a50"/><circle cx="963.4" cy="336.8" r="1.3" fill="#1a1a50"/><circle cx="982.7" cy="332.4" r="1.3" fill="#1a1a50"/><circle cx="1003.1" cy="327.8" r="1.3" fill="#1a1a50"/><circle cx="1024.8" cy="322.8" r="1.3" fill="#1a1a50"/><circle cx="1047.8" cy="317.5" r="1.3" fill="#1a1a50"/><circle cx="1072.3" cy="312.0" r="1.3" fill="#1a1a50"/><circle cx="1098.2" cy="306.0" r="1.3" fill="#1a1a50"/><circle cx="1125.7" cy="299.8" r="1.3" fill="#1a1a50"/><circle cx="1155.0" cy="293.1" r="1.3" fill="#1a1a50"/><circle cx="1186.0" cy="286.0" r="1.3" fill="#1a1a50"/><circle cx="1218.9" cy="278.5" r="1.3" fill="#1a1a50"/><circle cx="1253.9" cy="270.5" r="1.3" fill="#1a1a50"/><circle cx="1291.0" cy="262.0" r="1.3" fill="#1a1a50"/><circle cx="867.0" cy="366.0" r="1.3" fill="#1a1a50"/><circle cx="882.4" cy="362.9" r="1.3" fill="#1a1a50"/><circle cx="898.8" cy="359.6" r="1.3" fill="#1a1a50"/><circle cx="916.2" cy="356.1" r="1.3" fill="#1a1a50"/><circle cx="934.6" cy="352.3" r="1.3" fill="#1a1a50"/><circle cx="954.2" cy="348.4" r="1.3" fill="#1a1a50"/><circle cx="975.0" cy="344.2" r="1.3" fill="#1a1a50"/><circle cx="997.1" cy="339.7" r="1.3" fill="#1a1a50"/><circle cx="1020.5" cy="335.0" r="1.3" fill="#1a1a50"/><circle cx="1045.4" cy="330.0" r="1.3" fill="#1a1a50"/><circle cx="1071.8" cy="324.6" r="1.3" fill="#1a1a50"/><circle cx="1099.8" cy="319.0" r="1.3" fill="#1a1a50"/><circle cx="1129.5" cy="313.0" r="1.3" fill="#1a1a50"/><circle cx="1161.1" cy="306.6" r="1.3" fill="#1a1a50"/><circle cx="1194.6" cy="299.8" r="1.3" fill="#1a1a50"/><circle cx="1230.2" cy="292.6" r="1.3" fill="#1a1a50"/><circle cx="1268.0" cy="285.0" r="1.3" fill="#1a1a50"/><circle cx="897.0" cy="370.0" r="1.3" fill="#1a1a50"/><circle cx="912.2" cy="367.1" r="1.3" fill="#1a1a50"/><circle cx="928.2" cy="364.1" r="1.3" fill="#1a1a50"/><circle cx="945.3" cy="360.8" r="1.3" fill="#1a1a50"/><circle cx="963.4" cy="357.4" r="1.3" fill="#1a1a50"/><circle cx="982.7" cy="353.7" r="1.3" fill="#1a1a50"/><circle cx="1003.1" cy="349.8" r="1.3" fill="#1a1a50"/><circle cx="1024.8" cy="345.7" r="1.3" fill="#1a1a50"/><circle cx="1047.8" cy="341.3" r="1.3" fill="#1a1a50"/><circle cx="1072.3" cy="336.6" r="1.3" fill="#1a1a50"/><circle cx="1098.2" cy="331.7" r="1.3" fill="#1a1a50"/><circle cx="1125.7" cy="326.5" r="1.3" fill="#1a1a50"/><circle cx="1155.0" cy="320.9" r="1.3" fill="#1a1a50"/><circle cx="1186.0" cy="315.0" r="1.3" fill="#1a1a50"/><circle cx="1218.9" cy="308.7" r="1.3" fill="#1a1a50"/><circle cx="1253.9" cy="302.1" r="1.3" fill="#1a1a50"/><circle cx="1291.0" cy="295.0" r="1.3" fill="#1a1a50"/><polygon points="901.5,336.926 914.8,334 914.8,361.874 901.5,364.8" fill="#38e038" opacity="0.85"/><polygon points="901.5,336.926 914.8,334 914.8,347.86 901.5,350.786" fill="#207020" opacity="0.35"/><line x1="901.5" y1="336.9" x2="914.8" y2="334.0" stroke="#2040d8" stroke-width="2.6" stroke-linecap="round"/><line x1="901.5" y1="336.9" x2="901.5" y2="364.8" stroke="#2040d8" stroke-width="1.6" stroke-linecap="round"/><circle cx="901.5" cy="336.926" r="1.6" fill="#111"/><circle cx="914.8" cy="334" r="1.6" fill="#111"/><polygon points="943,325.432 958.6,322 958.6,352.568 943,356" fill="#38e038" opacity="0.85"/><polygon points="943,325.432 958.6,322 958.6,337.3 943,340.732" fill="#207020" opacity="0.35"/><line x1="943.0" y1="325.4" x2="958.6" y2="322.0" stroke="#2040d8" stroke-width="2.6" stroke-linecap="round"/><line x1="943.0" y1="325.4" x2="943.0" y2="356.0" stroke="#2040d8" stroke-width="1.6" stroke-linecap="round"/><circle cx="943" cy="325.432" r="1.6" fill="#111"/><circle cx="958.6" cy="322" r="1.6" fill="#111"/><polygon points="996.7,311.582 1014.8,307.6 1014.8,341.81800000000004 996.7,345.8" fill="#38e038" opacity="0.85"/><polygon points="996.7,311.582 1014.8,307.6 1014.8,324.79 996.7,328.772" fill="#207020" opacity="0.35"/><line x1="996.7" y1="311.6" x2="1014.8" y2="307.6" stroke="#2040d8" stroke-width="2.6" stroke-linecap="round"/><line x1="996.7" y1="311.6" x2="996.7" y2="345.8" stroke="#2040d8" stroke-width="1.6" stroke-linecap="round"/><circle cx="996.7" cy="311.582" r="1.6" fill="#111"/><circle cx="1014.8" cy="307.6" r="1.6" fill="#111"/><polygon points="1060.6,295.516 1083.4,290.5 1083.4,329.284 1060.6,334.3" fill="#38e038" opacity="0.85"/><polygon points="1060.6,295.516 1083.4,290.5 1083.4,310.21 1060.6,315.226" fill="#207020" opacity="0.35"/><line x1="1060.6" y1="295.5" x2="1083.4" y2="290.5" stroke="#2040d8" stroke-width="2.6" stroke-linecap="round"/><line x1="1060.6" y1="295.5" x2="1060.6" y2="334.3" stroke="#2040d8" stroke-width="1.6" stroke-linecap="round"/><circle cx="1060.6" cy="295.516" r="1.6" fill="#111"/><circle cx="1083.4" cy="290.5" r="1.6" fill="#111"/><polygon points="1141.9,274.452 1173.5,267.5 1173.5,309.848 1141.9,316.8" fill="#38e038" opacity="0.85"/><polygon points="1141.9,274.452 1173.5,267.5 1173.5,289.685 1141.9,296.637" fill="#207020" opacity="0.35"/><line x1="1141.9" y1="274.5" x2="1173.5" y2="267.5" stroke="#2040d8" stroke-width="2.6" stroke-linecap="round"/><line x1="1141.9" y1="274.5" x2="1141.9" y2="316.8" stroke="#2040d8" stroke-width="1.6" stroke-linecap="round"/><circle cx="1141.9" cy="274.452" r="1.6" fill="#111"/><circle cx="1173.5" cy="267.5" r="1.6" fill="#111"/><line x1="866.8" y1="348.0" x2="858.5" y2="468.0" stroke="#3a3ae6" stroke-width="6.5" stroke-linecap="butt"/><line x1="865.8" y1="348.0" x2="857.5" y2="468.0" stroke="#6a6af5" stroke-width="1.625" stroke-linecap="butt" opacity="0.7"/><line x1="897.2" y1="352.0" x2="901.2" y2="467.0" stroke="#3a3ae6" stroke-width="6.5" stroke-linecap="butt"/><line x1="896.2" y1="352.0" x2="900.2" y2="467.0" stroke="#6a6af5" stroke-width="1.625" stroke-linecap="butt" opacity="0.7"/><polygon points="869,366 897,368 897,374 869,372" fill="#40e040" opacity="0.9"/><line x1="1294.0" y1="265.0" x2="1305.0" y2="483.0" stroke="#3a3ae6" stroke-width="11" stroke-linecap="butt"/><line x1="1292.3" y1="265.0" x2="1303.3" y2="483.0" stroke="#6a6af5" stroke-width="2.75" stroke-linecap="butt" opacity="0.7"/><ellipse cx="1268" cy="248" rx="6" ry="3" fill="#2a2ac8"/><ellipse cx="1294" cy="263" rx="5.5" ry="2.6" fill="#2a2ac8"/><polygon points="1271,289 1292,294 1296,303 1290,306 1281,299" fill="#30d830" opacity="0.85"/><circle cx="1294" cy="301" r="3" fill="#30a040" stroke="#2a2ad0" stroke-width="1"/><path d="M852 469h14v9.5h-14zM859 469v9.5M894.5 468h13v8.5h-13zM901 468v8.5" fill="none" stroke="#58e050" stroke-width="1.1"/><path d="M1256 494l10 1v15l-10-1zM1266 495l11 0v16l-11-1zM1277 495l11 0.5v15.5l-11-0.5zM1291 488.5l9.5 1v14l-9.5-1zM1300.5 489.5l9 0v14.5l-9-0.5zM1309.5 489.5l11 0.5v14l-11-0.5z" fill="none" stroke="#58e050" stroke-width="1.2"/><line x1="1262.0" y1="488.0" x2="1268.0" y2="482.0" stroke="#222" stroke-width="1" stroke-linecap="round"/><line x1="1282.0" y1="488.0" x2="1276.0" y2="482.0" stroke="#222" stroke-width="1" stroke-linecap="round"/><line x1="1295.0" y1="485.0" x2="1300.0" y2="480.0" stroke="#222" stroke-width="1" stroke-linecap="round"/><line x1="1316.0" y1="485.0" x2="1310.0" y2="480.0" stroke="#222" stroke-width="1" stroke-linecap="round"/><rect x="870" y="461" width="4" height="4" fill="#d8e860" opacity="0.8"/><line x1="869.0" y1="466.0" x2="869.0" y2="446.0" stroke="#30e0f0" stroke-width="1.3" stroke-linecap="round"/><path d="M866.5 450L869 443.5 871.5 450z" fill="#30e0f0"/><line x1="869.0" y1="466.0" x2="888.0" y2="467.0" stroke="#30e0f0" stroke-width="1.3" stroke-linecap="round"/><path d="M884 464.3L891 467 884 469.5z" fill="#30e0f0"/><path d="M886 464.5l4 5M890 464.5l-4 5" stroke="#30e0f0" stroke-width="1"/><text x="865.5" y="442" font-size="8.5" fill="#30e0f0" font-family="Liberation Sans">Z</text><text x="892" y="470" font-size="8" fill="#30e0f0" font-family="Liberation Sans">Y</text><line x1="853.0" y1="460.0" x2="856.0" y2="463.0" stroke="#333" stroke-width="1" stroke-linecap="round"/><line x1="864.0" y1="462.0" x2="866.0" y2="460.0" stroke="#333" stroke-width="1" stroke-linecap="round"/><line x1="894.0" y1="459.0" x2="897.0" y2="462.0" stroke="#333" stroke-width="1" stroke-linecap="round"/><line x1="906.0" y1="461.0" x2="908.0" y2="459.0" stroke="#333" stroke-width="1" stroke-linecap="round"/><circle cx="859.5" cy="467" r="1.8" fill="#111"/><circle cx="901.5" cy="466" r="1.8" fill="#111"/></svg>
</div>
<!-- banner -->
<div class="a" style="left:218px;top:82px;width:918px;height:117px;background:#ec1c24"></div>
<div class="a" style="left:218px;top:85px;width:918px;text-align:center;font:bold 37.5px 'Liberation Sans';color:#ffff00;line-height:52px;white-space:nowrap;letter-spacing:-0.25px;-webkit-text-stroke:0.45px #ec1c24">Kết cấu thép Bảng chỉ dẫn giao thông - Hải Phòng<br>Sử dung thép ống</div>
<div class="a" style="left:48px;top:679px;font:bold 21.3px 'Liberation Sans';color:#1a96d4;-webkit-text-stroke:0.2px #fff;white-space:nowrap">Mr Hưng 0966 037 525</div>
</body></html>
